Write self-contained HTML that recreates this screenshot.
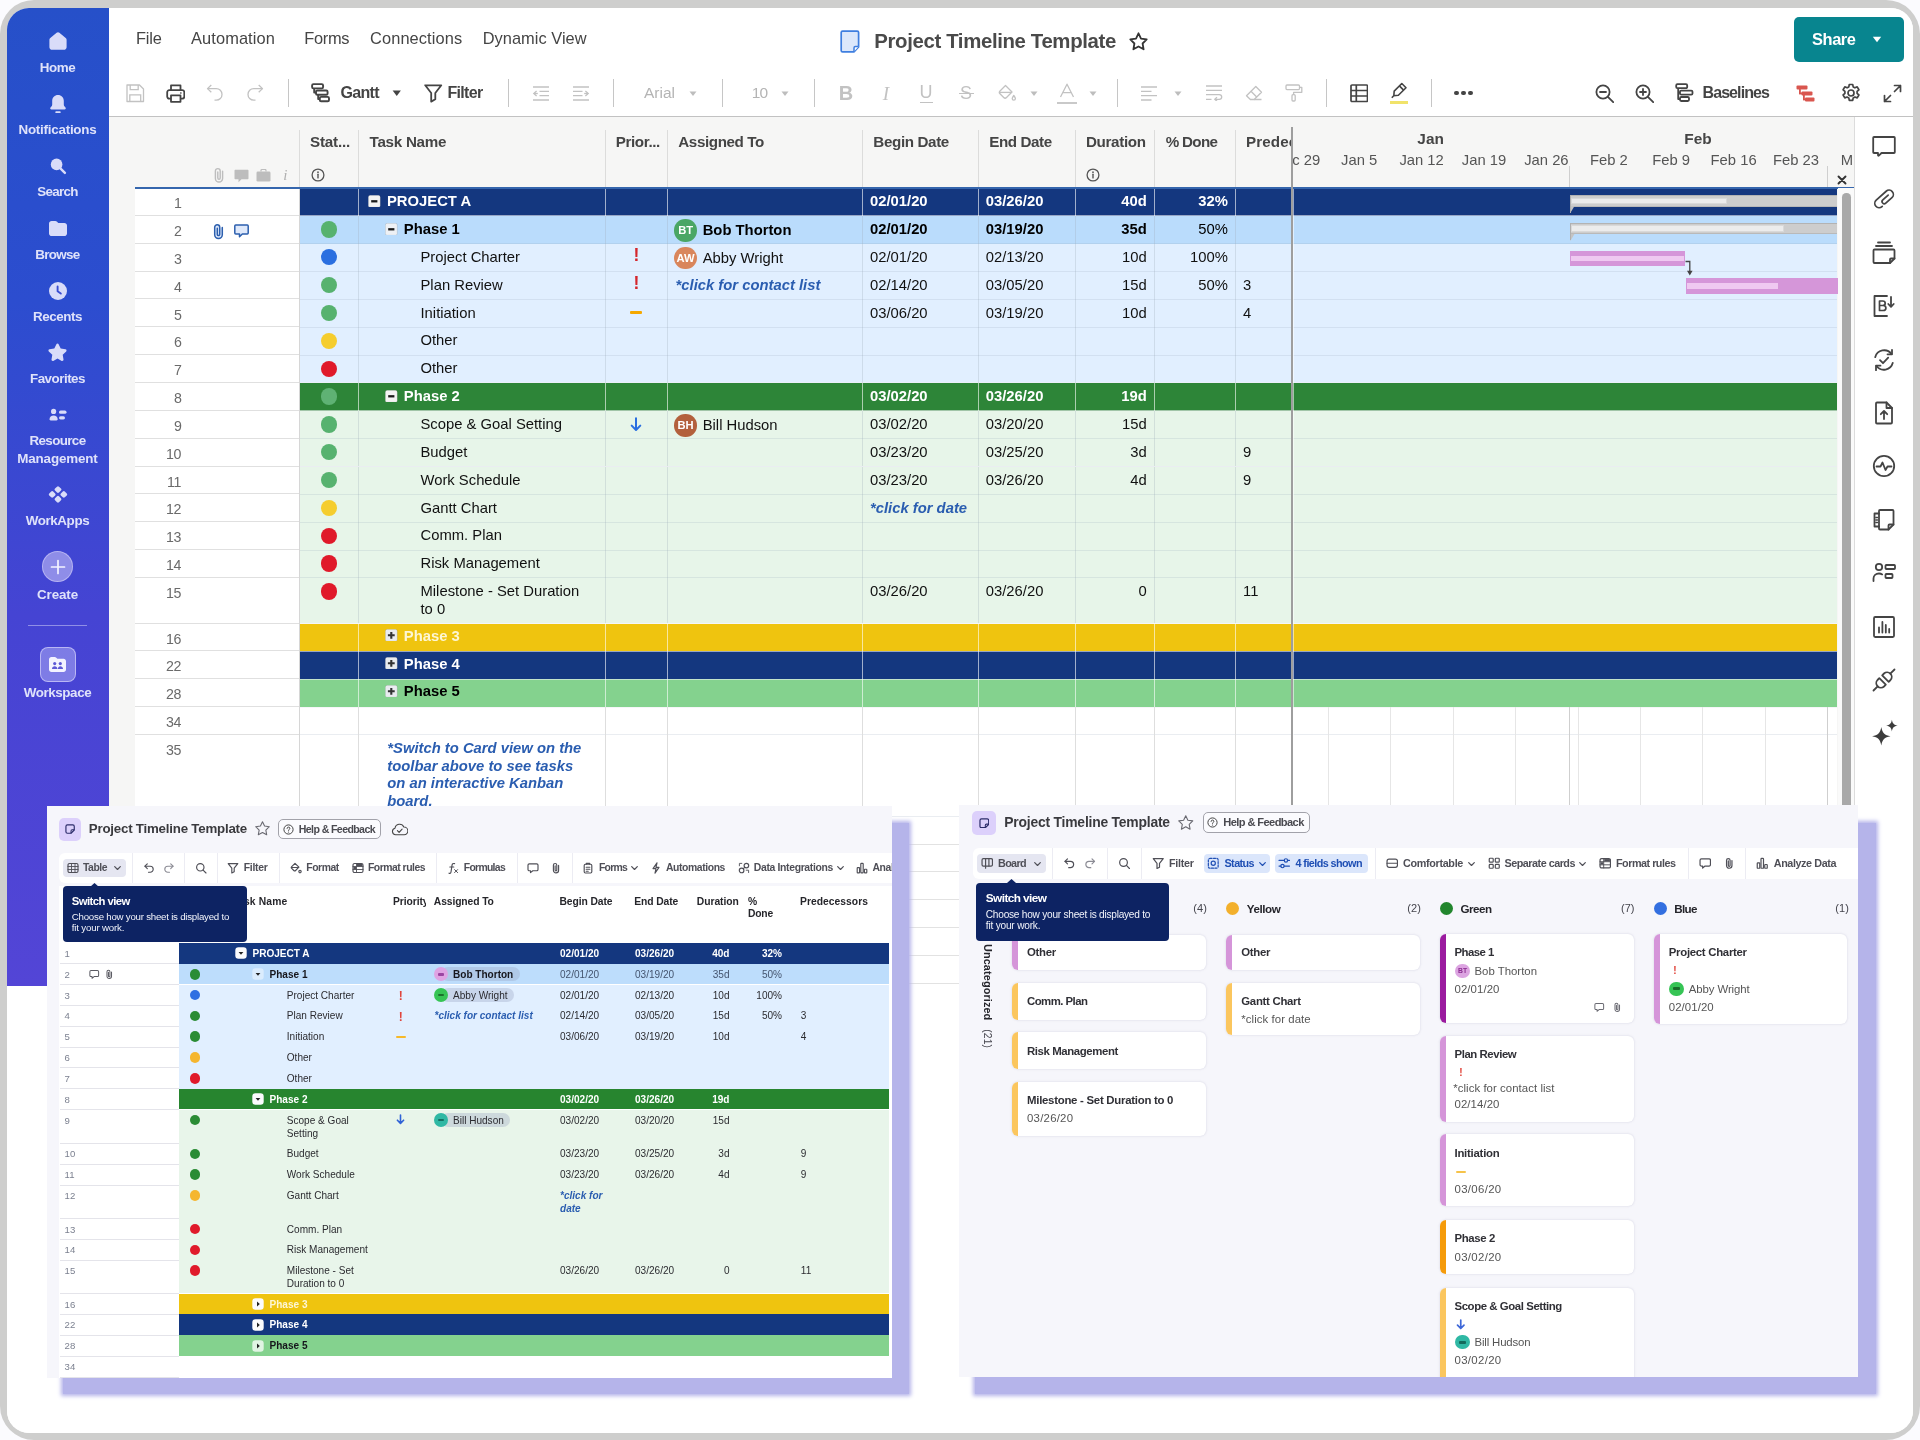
<!DOCTYPE html>
<html lang="en"><head><meta charset="utf-8"><title>Project Timeline Template</title>
<style>
*{box-sizing:border-box;margin:0;padding:0}
html,body{width:1920px;height:1440px}
body{position:relative;overflow:hidden;background:#fbfbfe;font-family:"Liberation Sans",sans-serif;color:#111}
.a{position:absolute;display:block}
.t{position:absolute;white-space:nowrap;line-height:1;display:block}
.ml{position:absolute;display:block}
</style></head><body>

<div class="a" style="left:0;top:0;width:1920px;height:1440px;border-radius:34px;background:#cececd"></div>
<div id="inner" class="a" style="left:7px;top:8px;width:1905.5px;height:1425px;border-radius:22px;background:#fff;overflow:hidden">
<div class="a" style="left:-7px;top:-8px;width:1920px;height:1440px;will-change:transform">
<div class="a" style="left:108.70px;top:117.00px;width:1745.30px;height:868.50px;background:#f6f6f5;"></div>
<div class="a" style="left:7.00px;top:8.00px;width:101.70px;height:977.50px;background:linear-gradient(180deg,#2650c9 0%,#2c4dcf 30%,#4544d3 62%,#5345d6 100%);"></div>
<svg class="a" style="left:47.50px;top:31.00px;" width="20" height="20" viewBox="0 0 20 20" ><path d="M10 1.2c.5 0 1 .2 1.4.5l6.3 5.2c.6.5.9 1.2.9 1.9v7.4c0 1.5-1.2 2.6-2.6 2.6H4c-1.400 0-2.600-1.100-2.600-2.600V8.800c0-.700.300-1.400.900-1.900l6.300-5.200c.400-.300.900-.500 1.400-.500z" fill="#d9dcf9"/></svg>
<span class="t" style="top:60.80px;font-size:13.4px;color:#dfe2fa;font-weight:bold;letter-spacing:-0.432px;left:39.75px;">Home</span>
<svg class="a" style="left:47.50px;top:93.50px;" width="20" height="21" viewBox="0 0 20 21" ><path d="M10 1c3.300 0 5.800 2.600 5.800 5.800v3.600c0 .800.300 1.500.800 2.100l.900 1c.700.800.100 2-.900 2H3.400c-1 0-1.600-1.200-.900-2l.900-1c.500-.600.800-1.300.800-2.100V6.800C4.200 3.600 6.700 1 10 1z" fill="#d9dcf9"/><rect x="7.300" y="17.300" width="5.400" height="1.700" rx=".85" fill="#d9dcf9"/></svg>
<span class="t" style="top:123.30px;font-size:13.4px;color:#dfe2fa;font-weight:bold;letter-spacing:-0.242px;left:18.50px;">Notifications</span>
<svg class="a" style="left:47.50px;top:156.00px;" width="20" height="20" viewBox="0 0 20 20" ><circle cx="8.600" cy="8.400" r="5.800" fill="#d9dcf9"/><path d="M12.600 12.600l4.300 4.300" stroke="#d9dcf9" stroke-width="2.400" stroke-linecap="round"/></svg>
<span class="t" style="top:185.30px;font-size:13.4px;color:#dfe2fa;font-weight:bold;letter-spacing:-0.699px;left:37.25px;">Search</span>
<svg class="a" style="left:47.50px;top:220.00px;" width="20" height="18" viewBox="0 0 20 18" ><path d="M1 3.600C1 2.200 2.200 1 3.600 1h3.600c.700 0 1.400.300 1.900.800l.900.900c.200.200.500.300.800.300h5.600C17.800 3 19 4.200 19 5.600v7.800c0 1.400-1.200 2.600-2.600 2.600H3.600C2.200 16 1 14.800 1 13.400z" fill="#d9dcf9"/></svg>
<span class="t" style="top:247.80px;font-size:13.4px;color:#dfe2fa;font-weight:bold;letter-spacing:-0.684px;left:35.35px;">Browse</span>
<svg class="a" style="left:47.50px;top:280.50px;" width="20" height="20" viewBox="0 0 20 20" ><circle cx="10" cy="10" r="9" fill="#d9dcf9"/><path d="M9.600 5.500v4.800l3.200 2.300" stroke="#3a4dd2" stroke-width="1.900" fill="none" stroke-linecap="round" stroke-linejoin="round"/></svg>
<span class="t" style="top:310.30px;font-size:13.4px;color:#dfe2fa;font-weight:bold;letter-spacing:-0.476px;left:33.10px;">Recents</span>
<svg class="a" style="left:47.00px;top:342.00px;" width="21" height="21" viewBox="0 0 21 21" ><path d="M10.500 1.500c.500 0 .900.300 1.100.700l2.100 4.400 4.800.700c1 .100 1.400 1.400.700 2.100l-3.500 3.400.800 4.800c.200 1-.900 1.800-1.800 1.300l-4.200-2.300-4.200 2.300c-.900.500-2-.300-1.800-1.300l.800-4.800-3.500-3.400c-.700-.700-.300-2 .700-2.100l4.800-.700 2.100-4.400c.200-.400.600-.700 1.100-.700z" fill="#d9dcf9"/></svg>
<span class="t" style="top:372.10px;font-size:13.4px;color:#dfe2fa;font-weight:bold;letter-spacing:-0.509px;left:30.00px;">Favorites</span>
<svg class="a" style="left:48.50px;top:408.00px;" width="18" height="15" viewBox="0 0 18 15" ><circle cx="4.600" cy="3.400" r="2.600" fill="#d9dcf9"/><path d="M0.500 11.200C0.500 8.900 2.300 7.400 4.600 7.400s4.100 1.500 4.100 3.800c0 .700-.500 1.200-1.200 1.200H1.700c-.700 0-1.200-.500-1.200-1.200z" fill="#d9dcf9"/><rect x="10" y="2.600" width="7.500" height="3.200" rx="1.600" fill="#d9dcf9"/><rect x="10" y="8.200" width="6" height="3.200" rx="1.600" fill="#d9dcf9"/></svg>
<span class="t" style="top:434.30px;font-size:13.4px;color:#dfe2fa;font-weight:bold;letter-spacing:-0.634px;left:29.50px;">Resource</span>
<span class="t" style="top:452.30px;font-size:13.4px;color:#dfe2fa;font-weight:bold;letter-spacing:-0.141px;left:17.25px;">Management</span>
<svg class="a" style="left:47.50px;top:486.00px;" width="20" height="18" viewBox="0 0 20 18" ><g fill="#d9dcf9"><rect x="7.200" y="0.800" width="5.600" height="5.600" rx="1.400" transform="rotate(45 10 3.600)"/><rect x="7.200" y="10.400" width="5.600" height="5.600" rx="1.400" transform="rotate(45 10 13.200)"/><rect x="1.400" y="5.600" width="5.600" height="5.600" rx="1.400" transform="rotate(45 4.200 8.400)"/><rect x="13" y="5.600" width="5.600" height="5.600" rx="1.400" transform="rotate(45 15.800 8.400)"/></g></svg>
<span class="t" style="top:514.30px;font-size:13.4px;color:#dfe2fa;font-weight:bold;letter-spacing:-0.407px;left:25.75px;">WorkApps</span>
<div class="a" style="left:42.00px;top:551.00px;width:31.00px;height:31.00px;background:rgba(190,186,246,.62);border-radius:50%;border:1px solid rgba(215,212,250,.55);"></div>
<svg class="a" style="left:49.50px;top:558.50px;" width="16" height="16" viewBox="0 0 16 16" ><path d="M8 1.500v13M1.500 8h13" stroke="#f4f4ff" stroke-width="1.700" stroke-linecap="round"/></svg>
<span class="t" style="top:587.80px;font-size:13.4px;color:#dfe2fa;font-weight:bold;letter-spacing:-0.119px;left:37.00px;">Create</span>
<div class="a" style="left:28.00px;top:624.50px;width:59.00px;height:1.20px;background:rgba(205,205,245,.55);"></div>
<div class="a" style="left:40.00px;top:646.50px;width:35.50px;height:35.00px;background:rgba(160,158,240,.62);border-radius:8px;border:1.5px solid rgba(206,204,250,.75);"></div>
<svg class="a" style="left:48.00px;top:655.50px;" width="19" height="17" viewBox="0 0 19 17" ><path d="M1 3.400C1 2.100 2.100 1 3.400 1h3.300c.600 0 1.200.200 1.600.700l.800.800c.200.200.400.300.700.300h5.800c1.300 0 2.400 1.100 2.400 2.400v8.400c0 1.300-1.100 2.400-2.400 2.400H3.400C2.100 16 1 14.900 1 13.600z" fill="#f3f3ff"/><g fill="#5d59d6"><circle cx="6.700" cy="7.600" r="1.600"/><circle cx="12.300" cy="7.600" r="1.600"/><path d="M4 12.700c0-1.500 1.200-2.500 2.700-2.500s2.700 1 2.700 2.500v.300H4zM9.900 12.700c0-1.500 1.100-2.500 2.400-2.500 1.500 0 2.700 1 2.700 2.500v.300H9.900z"/></g></svg>
<span class="t" style="top:685.80px;font-size:13.4px;color:#dfe2fa;font-weight:bold;letter-spacing:-0.417px;left:23.75px;">Workspace</span>
<div class="a" style="left:108.70px;top:8.00px;width:1804.30px;height:109.00px;background:#fff;"></div>
<span class="t" style="top:30.40px;font-size:16.4px;color:#454545;letter-spacing:-0.182px;left:136.00px;">File</span>
<span class="t" style="top:30.40px;font-size:16.4px;color:#454545;letter-spacing:0.104px;left:191.00px;">Automation</span>
<span class="t" style="top:30.40px;font-size:16.4px;color:#454545;letter-spacing:-0.292px;left:304.30px;">Forms</span>
<span class="t" style="top:30.40px;font-size:16.4px;color:#454545;letter-spacing:0.103px;left:370.00px;">Connections</span>
<span class="t" style="top:30.40px;font-size:16.4px;color:#454545;letter-spacing:0.034px;left:482.70px;">Dynamic View</span>
<svg class="a" style="left:840.00px;top:29.50px;" width="20" height="23" viewBox="0 0 20 23" ><path d="M2.600 1.200h14.600c.800 0 1.400.600 1.400 1.400v14.300l-4.400 4.900H2.600c-.800 0-1.400-.600-1.400-1.400V2.600c0-.800.600-1.400 1.400-1.400z" fill="#dce8fb" stroke="#3f7fe0" stroke-width="1.700" stroke-linejoin="round"/><path d="M18.600 16.600h-3.200c-.800 0-1.400.600-1.400 1.400v3.600" fill="#fff" stroke="#3f7fe0" stroke-width="1.500" stroke-linejoin="round"/></svg>
<span class="t" style="top:30.60px;font-size:20.4px;color:#4a4a4a;font-weight:bold;letter-spacing:-0.369px;left:874.30px;">Project Timeline Template</span>
<svg class="a" style="left:1127.50px;top:30.50px;" width="21" height="21" viewBox="0 0 21 21" ><path d="M10.500 2.300l2.500 5.300 5.700.800-4.100 4.100 1 5.800-5.100-2.800-5.100 2.800 1-5.800-4.100-4.100 5.700-.800z" fill="none" stroke="#333" stroke-width="1.800" stroke-linejoin="round"/></svg>
<div class="a" style="left:1793.50px;top:17.00px;width:110.50px;height:44.50px;background:#08858f;border-radius:5px;"></div>
<span class="t" style="top:30.60px;font-size:16.4px;color:#fff;font-weight:bold;letter-spacing:-0.396px;left:1812.00px;">Share</span>
<svg class="a" style="left:1872.00px;top:35.50px;" width="10" height="7" viewBox="0 0 10 7" ><path d="M0.800 0.800h8.400L5 6.200z" fill="#fff"/></svg>
<svg class="a" style="left:126.00px;top:84.00px;" width="18.5" height="18.5" viewBox="0 0 18.5 18.5" ><path d="M1 1h12.500l4 4v12.500H1z" fill="none" stroke="#c2c2c2" stroke-width="1.300" stroke-linejoin="round"/><path d="M4.200 1v4.600h8V1M3.800 17.500v-6.700h10.900v6.700" fill="none" stroke="#c2c2c2" stroke-width="1.300"/></svg>
<svg class="a" style="left:165.50px;top:83.50px;" width="19.5" height="19" viewBox="0 0 19.5 19" ><path d="M5 6.200V1.400h9.500v4.800" fill="none" stroke="#444" stroke-width="1.800" stroke-linejoin="round"/><rect x="1.200" y="6.200" width="17.100" height="8.400" rx="2" fill="none" stroke="#444" stroke-width="1.800"/><rect x="5" y="11.400" width="9.500" height="6.400" fill="#fff" stroke="#444" stroke-width="1.800" stroke-linejoin="round"/><path d="M14.200 9h1.300" stroke="#444" stroke-width="1.400"/></svg>
<svg class="a" style="left:206.00px;top:84.00px;" width="18" height="18" viewBox="0 0 18 18" ><path d="M1.500 4.600h8.700c3.300 0 5.800 2.500 5.800 5.800s-2.500 5.800-5.800 5.800H8.500" fill="none" stroke="#c2c2c2" stroke-width="1.300"/><path d="M5.300 1L1.500 4.600l3.800 3.600" fill="none" stroke="#c2c2c2" stroke-width="1.300" stroke-linejoin="round"/></svg>
<svg class="a" style="left:246.00px;top:84.00px;" width="18" height="18" viewBox="0 0 18 18" ><path d="M16.500 4.600H7.800C4.500 4.600 2 7.100 2 10.400s2.500 5.800 5.800 5.800h1.700" fill="none" stroke="#c2c2c2" stroke-width="1.300"/><path d="M12.700 1l3.800 3.600-3.800 3.600" fill="none" stroke="#c2c2c2" stroke-width="1.300" stroke-linejoin="round"/></svg>
<div class="a" style="left:287.50px;top:79.00px;width:1.40px;height:28.00px;background:#c6c6c6;"></div>
<svg class="a" style="left:310.80px;top:83.20px;" width="19.2" height="19.4" viewBox="0 0 19.2 19.4" ><g fill="none" stroke="#444" stroke-width="1.900" stroke-linejoin="round"><rect x="1.100" y="1.100" width="11" height="4.300" rx="1.300"/><rect x="5" y="7.500" width="11.600" height="4.300" rx="1.300"/><rect x="8.800" y="13.900" width="9.200" height="4.300" rx="1.300"/><path d="M3.200 5.400v4.200h1.800M7.200 11.800v4.200h1.600"/></g></svg>
<span class="t" style="top:85.20px;font-size:16px;color:#444;font-weight:bold;letter-spacing:-0.695px;left:340.50px;">Gantt</span>
<svg class="a" style="left:391.50px;top:90.30px;" width="9.5" height="6.5" viewBox="0 0 9.5 6.5" ><path d="M0.600 0.600h8.300L4.750 6z" fill="#444"/></svg>
<svg class="a" style="left:424.00px;top:84.00px;" width="18.5" height="19" viewBox="0 0 18.5 19" ><path d="M1.200 1.300h16.100l-6 7.700v6.300l-4.100 2.300V9z" fill="none" stroke="#444" stroke-width="1.800" stroke-linejoin="round"/></svg>
<span class="t" style="top:85.20px;font-size:16px;color:#444;font-weight:bold;letter-spacing:-0.686px;left:447.50px;">Filter</span>
<div class="a" style="left:507.50px;top:79.00px;width:1.40px;height:28.00px;background:#c6c6c6;"></div>
<svg class="a" style="left:532.00px;top:85.50px;" width="18" height="15" viewBox="0 0 18 15" ><g stroke="#c2c2c2" stroke-width="1.300" fill="none"><path d="M1 1h16M7.500 5.300H17M7.500 9.700H17M1 14h16M4.600 5L1.800 7.500 4.600 10"/><path d="M1.800 7.500h4"/></g></svg>
<svg class="a" style="left:572.00px;top:85.50px;" width="18" height="15" viewBox="0 0 18 15" ><g stroke="#c2c2c2" stroke-width="1.300" fill="none"><path d="M1 1h16M1 5.300h9.500M1 9.700h9.500M1 14h16M13.400 5l2.800 2.500L13.400 10"/><path d="M16.200 7.500h-4"/></g></svg>
<div class="a" style="left:612.50px;top:79.00px;width:1.40px;height:28.00px;background:#c6c6c6;"></div>
<span class="t" style="top:85.45px;font-size:15.5px;color:#b4b4b4;left:644.00px;">Arial</span>
<svg class="a" style="left:689.30px;top:90.80px;" width="8" height="5.5" viewBox="0 0 8 5.5" ><path d="M0.500 0.500h7L4 5z" fill="#bdbdbd"/></svg>
<div class="a" style="left:721.50px;top:79.00px;width:1.40px;height:28.00px;background:#c6c6c6;"></div>
<span class="t" style="top:85.45px;font-size:15.5px;color:#b4b4b4;letter-spacing:-0.820px;left:751.70px;">10</span>
<svg class="a" style="left:781.00px;top:90.80px;" width="8" height="5.5" viewBox="0 0 8 5.5" ><path d="M0.500 0.500h7L4 5z" fill="#bdbdbd"/></svg>
<div class="a" style="left:813.50px;top:79.00px;width:1.40px;height:28.00px;background:#c6c6c6;"></div>
<span class="t" style="top:83.20px;font-size:20px;color:#c2c2c2;font-weight:bold;left:838.78px;">B</span>
<span class="t" style="top:83.70px;font-size:19px;color:#c2c2c2;font-style:italic;left:882.86px;font-family:'Liberation Serif',serif;">I</span>
<span class="t" style="top:83.40px;font-size:18px;color:#c2c2c2;left:919.50px;">U</span>
<div class="a" style="left:919.50px;top:101.50px;width:13.00px;height:1.30px;background:#c2c2c2;"></div>
<span class="t" style="top:84.20px;font-size:18px;color:#c2c2c2;left:960.00px;">S</span>
<div class="a" style="left:958.50px;top:92.60px;width:15.00px;height:1.30px;background:#c2c2c2;"></div>
<svg class="a" style="left:998.00px;top:84.00px;" width="19" height="18" viewBox="0 0 19 18" ><g fill="none" stroke="#c2c2c2" stroke-width="1.300" stroke-linejoin="round"><path d="M7.500 1.500l6.500 6.500-5.500 5.500c-.800.800-2 .800-2.800 0L2 9.800c-.800-.800-.800-2 0-2.800z"/><path d="M1.600 8.400h12"/><path d="M15.800 11.500c1 1.400 1.600 2.300 1.600 3.100a1.600 1.600 0 01-3.200 0c0-.800.600-1.700 1.600-3.100z"/></g></svg>
<svg class="a" style="left:1030.00px;top:90.80px;" width="8" height="5.5" viewBox="0 0 8 5.5" ><path d="M0.500 0.500h7L4 5z" fill="#bdbdbd"/></svg>
<svg class="a" style="left:1057.50px;top:83.00px;" width="18" height="15" viewBox="0 0 18 15" ><path d="M2.500 14L9 1.200 15.500 14M4.800 9.600h8.400" fill="none" stroke="#c2c2c2" stroke-width="1.300" stroke-linejoin="round"/></svg>
<div class="a" style="left:1056.50px;top:101.50px;width:20.50px;height:2.20px;background:#c9c9c9;"></div>
<svg class="a" style="left:1089.00px;top:90.80px;" width="8" height="5.5" viewBox="0 0 8 5.5" ><path d="M0.500 0.500h7L4 5z" fill="#bdbdbd"/></svg>
<div class="a" style="left:1116.50px;top:79.00px;width:1.40px;height:28.00px;background:#c6c6c6;"></div>
<svg class="a" style="left:1139.50px;top:85.50px;" width="18" height="15" viewBox="0 0 18 15" ><path d="M1 1h16M1 5.300h10.500M1 9.700h16M1 14h10.500" stroke="#c2c2c2" stroke-width="1.300" fill="none"/></svg>
<svg class="a" style="left:1173.70px;top:90.80px;" width="8" height="5.5" viewBox="0 0 8 5.5" ><path d="M0.500 0.500h7L4 5z" fill="#bdbdbd"/></svg>
<svg class="a" style="left:1204.50px;top:85.00px;" width="18" height="16" viewBox="0 0 18 16" ><g stroke="#c2c2c2" stroke-width="1.300" fill="none"><path d="M1 1h16M1 5.300h16M1 9.700h13.200c1.500 0 2.500 1 2.500 2.300s-1 2.300-2.500 2.300H10M1 14.300h5.500"/><path d="M12 12.300l-2.200 2 2.200 2"/></g></svg>
<svg class="a" style="left:1245.00px;top:84.50px;" width="18" height="17" viewBox="0 0 18 17" ><g stroke="#c2c2c2" stroke-width="1.300" fill="none" stroke-linejoin="round"><path d="M10.800 1.500l5.700 5.700-7.300 7.300H5.400L1.500 10.700z"/><path d="M6 6.300l5.700 5.700M9.200 14.500h7.300"/></g></svg>
<svg class="a" style="left:1284.50px;top:84.00px;" width="18" height="18" viewBox="0 0 18 18" ><g stroke="#c2c2c2" stroke-width="1.300" fill="none" stroke-linejoin="round"><rect x="1" y="1" width="13.500" height="4.600" rx="1"/><path d="M14.500 3.300h2.300v5H8.600v2.400"/><rect x="7" y="10.700" width="3.200" height="6.300" rx="1"/></g></svg>
<div class="a" style="left:1325.50px;top:79.00px;width:1.40px;height:28.00px;background:#c6c6c6;"></div>
<svg class="a" style="left:1349.50px;top:84.00px;" width="18.5" height="18.5" viewBox="0 0 18.5 18.5" ><g stroke="#444" stroke-width="1.700" fill="none" stroke-linejoin="round"><rect x="1" y="1" width="16.500" height="16.500" rx="1"/><path d="M1 6.500h16.500M1 12h16.500M6.300 1v16.500"/></g></svg>
<svg class="a" style="left:1390.00px;top:82.00px;" width="18" height="17" viewBox="0 0 18 17" ><g stroke="#444" stroke-width="1.600" fill="none" stroke-linejoin="round"><path d="M11.800 1.500l4.200 4.200-7.600 7.600-4.600.400.400-4.600z"/><path d="M9.400 3.900l4.200 4.200M3.500 14l-1.700 1.800"/></g></svg>
<div class="a" style="left:1390.00px;top:101.00px;width:17.50px;height:2.60px;background:#f1e36a;"></div>
<div class="a" style="left:1430.50px;top:79.00px;width:1.40px;height:28.00px;background:#c6c6c6;"></div>
<div class="a" style="left:1454.40px;top:91.10px;width:4.20px;height:4.20px;background:#444;border-radius:50%;"></div>
<div class="a" style="left:1461.40px;top:91.10px;width:4.20px;height:4.20px;background:#444;border-radius:50%;"></div>
<div class="a" style="left:1468.40px;top:91.10px;width:4.20px;height:4.20px;background:#444;border-radius:50%;"></div>
<svg class="a" style="left:1594.50px;top:83.50px;" width="19.5" height="19.5" viewBox="0 0 19.5 19.5" ><g stroke="#444" stroke-width="1.800" fill="none" stroke-linecap="round"><circle cx="8" cy="8" r="6.600"/><path d="M12.900 12.900l5.300 5.300M5 8h6"/></g></svg>
<svg class="a" style="left:1634.50px;top:83.50px;" width="19.5" height="19.5" viewBox="0 0 19.5 19.5" ><g stroke="#444" stroke-width="1.800" fill="none" stroke-linecap="round"><circle cx="8" cy="8" r="6.600"/><path d="M12.900 12.900l5.300 5.300M5 8h6M8 5v6"/></g></svg>
<svg class="a" style="left:1675.00px;top:83.40px;" width="19" height="19.4" viewBox="0 0 19 19.4" ><g fill="none" stroke="#444" stroke-width="1.800" stroke-linejoin="round"><rect x="1.200" y="1.200" width="11" height="4" rx="1.200"/><rect x="5" y="7.600" width="12.500" height="4" rx="1.200"/><rect x="5" y="14" width="9" height="4" rx="1.200"/><path d="M3.200 5.200v10.800h1.800M3.200 9.600h1.800"/></g></svg>
<span class="t" style="top:85.20px;font-size:16px;color:#444;font-weight:bold;letter-spacing:-0.912px;left:1702.50px;">Baselines</span>
<svg class="a" style="left:1795.50px;top:84.00px;" width="19" height="19" viewBox="0 0 19 19" ><g fill="#d9564f"><rect x="0.500" y="1.500" width="11" height="4" rx="1"/><rect x="5.500" y="7.500" width="11" height="4" rx="1"/><rect x="9" y="13.500" width="9.500" height="4" rx="1"/><rect x="3" y="5" width="1.800" height="5"/><rect x="3" y="8.600" width="3" height="1.800"/><rect x="7" y="11" width="1.800" height="5"/><rect x="7" y="14.600" width="3" height="1.800"/></g></svg>
<svg class="a" style="left:1841.00px;top:83.00px;" width="20" height="20" viewBox="0 0 20 20" ><g fill="none" stroke="#444" stroke-width="1.700" stroke-linejoin="round"><circle cx="10" cy="10" r="3"/><path d="M8.300 1.500h3.400l.500 2.400 1.700.900 2.300-.900 1.700 2.900-1.800 1.600v2l1.800 1.600-1.700 2.900-2.300-.900-1.700.900-.500 2.400H8.300l-.500-2.400-1.700-.900-2.300.900-1.700-2.900 1.800-1.600v-2L2.100 6.800l1.700-2.900 2.300.900 1.700-.900z"/></g></svg>
<svg class="a" style="left:1882.50px;top:83.50px;" width="19" height="19" viewBox="0 0 19 19" ><g fill="none" stroke="#444" stroke-width="1.700" stroke-linecap="round" stroke-linejoin="round"><path d="M11.500 1.500h6v6M17.500 1.500l-6 6M7.500 17.500h-6v-6M1.500 17.500l6-6"/></g></svg>
<div class="a" style="left:108.70px;top:116.00px;width:1804.30px;height:1.00px;background:#c2c2c2;"></div>
<span class="t" style="top:133.70px;font-size:15.2px;color:#454545;font-weight:bold;letter-spacing:-0.198px;left:310.00px;">Stat...</span>
<span class="t" style="top:133.70px;font-size:15.2px;color:#454545;font-weight:bold;letter-spacing:-0.260px;left:369.50px;">Task Name</span>
<span class="t" style="top:133.70px;font-size:15.2px;color:#454545;font-weight:bold;letter-spacing:-0.376px;left:615.70px;">Prior...</span>
<span class="t" style="top:133.70px;font-size:15.2px;color:#454545;font-weight:bold;letter-spacing:-0.398px;left:678.30px;">Assigned To</span>
<span class="t" style="top:133.70px;font-size:15.2px;color:#454545;font-weight:bold;letter-spacing:-0.369px;left:873.30px;">Begin Date</span>
<span class="t" style="top:133.70px;font-size:15.2px;color:#454545;font-weight:bold;letter-spacing:-0.435px;left:989.30px;">End Date</span>
<span class="t" style="top:133.70px;font-size:15.2px;color:#454545;font-weight:bold;letter-spacing:-0.348px;left:1086.00px;">Duration</span>
<span class="t" style="top:133.70px;font-size:15.2px;color:#454545;font-weight:bold;letter-spacing:-0.690px;left:1165.70px;">% Done</span>
<div class="a" style="left:1236px;top:128px;width:55.5px;height:28px;overflow:hidden"><span class="t" style="top:5.70px;font-size:15.2px;color:#454545;font-weight:bold;letter-spacing:0.107px;left:10.00px;">Predecessors</span></div>
<div class="a" style="left:298.80px;top:130.00px;width:1.00px;height:58.00px;background:#dcdcdb;"></div>
<div class="a" style="left:357.80px;top:130.00px;width:1.00px;height:58.00px;background:#dcdcdb;"></div>
<div class="a" style="left:604.50px;top:130.00px;width:1.00px;height:58.00px;background:#dcdcdb;"></div>
<div class="a" style="left:666.90px;top:130.00px;width:1.00px;height:58.00px;background:#dcdcdb;"></div>
<div class="a" style="left:861.80px;top:130.00px;width:1.00px;height:58.00px;background:#dcdcdb;"></div>
<div class="a" style="left:977.80px;top:130.00px;width:1.00px;height:58.00px;background:#dcdcdb;"></div>
<div class="a" style="left:1074.50px;top:130.00px;width:1.00px;height:58.00px;background:#dcdcdb;"></div>
<div class="a" style="left:1153.80px;top:130.00px;width:1.00px;height:58.00px;background:#dcdcdb;"></div>
<div class="a" style="left:1234.50px;top:130.00px;width:1.00px;height:58.00px;background:#dcdcdb;"></div>
<svg class="a" style="left:212.50px;top:167.00px;" width="12" height="16" viewBox="0 0 12 16" ><path d="M9.600 4.200v7.200a3.600 3.600 0 01-7.200 0V4a2.400 2.400 0 014.800 0v7a1.200 1.200 0 01-2.400 0V5" fill="none" stroke="#bdbdbd" stroke-width="1.400" stroke-linecap="round"/></svg>
<svg class="a" style="left:233.50px;top:168.50px;" width="15" height="14" viewBox="0 0 15 14" ><path d="M1.500 0.800h12c.600 0 1 .400 1 1v7.400c0 .600-.400 1-1 1H7.500l-3 3v-3h-3c-.600 0-1-.400-1-1V1.800c0-.600.400-1 1-1z" fill="#bdbdbd"/></svg>
<svg class="a" style="left:255.50px;top:168.50px;" width="15" height="13" viewBox="0 0 15 13" ><path d="M5 2.600V1.400c0-.500.400-.900.900-.900h3.200c.500 0 .900.400.900.900v1.200" fill="none" stroke="#bdbdbd" stroke-width="1.200"/><rect x="0.500" y="2.600" width="14" height="10" rx="1.400" fill="#bdbdbd"/></svg>
<span class="t" style="top:168.00px;font-size:15px;color:#b0b0b0;font-style:italic;left:283.33px;font-family:'Liberation Serif',serif;">i</span>
<svg class="a" style="left:310.50px;top:168.00px;" width="14" height="14" viewBox="0 0 14 14" ><circle cx="7" cy="7" r="5.900" fill="none" stroke="#555" stroke-width="1.300"/><path d="M7 6.300v3.600" stroke="#555" stroke-width="1.400" stroke-linecap="round"/><circle cx="7" cy="4.200" r=".85" fill="#555"/></svg>
<svg class="a" style="left:1086.30px;top:168.00px;" width="14" height="14" viewBox="0 0 14 14" ><circle cx="7" cy="7" r="5.900" fill="none" stroke="#555" stroke-width="1.300"/><path d="M7 6.300v3.600" stroke="#555" stroke-width="1.400" stroke-linecap="round"/><circle cx="7" cy="4.200" r=".85" fill="#555"/></svg>
<span class="t" style="top:130.90px;font-size:15.4px;color:#454545;font-weight:bold;left:1417.33px;">Jan</span>
<span class="t" style="top:130.90px;font-size:15.4px;color:#454545;font-weight:bold;left:1684.31px;">Feb</span>
<div class="a" style="left:1293px;top:150px;width:559px;height:22px;overflow:hidden">
<span class="t" style="top:3.40px;font-size:14.8px;color:#555;left:-19.65px;">Dec 29</span>
<span class="t" style="top:3.40px;font-size:14.8px;color:#555;left:48.10px;">Jan 5</span>
<span class="t" style="top:3.40px;font-size:14.8px;color:#555;left:106.38px;">Jan 12</span>
<span class="t" style="top:3.40px;font-size:14.8px;color:#555;left:168.78px;">Jan 19</span>
<span class="t" style="top:3.40px;font-size:14.8px;color:#555;left:231.18px;">Jan 26</span>
<span class="t" style="top:3.40px;font-size:14.8px;color:#555;left:296.88px;">Feb 2</span>
<span class="t" style="top:3.40px;font-size:14.8px;color:#555;left:359.28px;">Feb 9</span>
<span class="t" style="top:3.40px;font-size:14.8px;color:#555;left:417.56px;">Feb 16</span>
<span class="t" style="top:3.40px;font-size:14.8px;color:#555;left:479.96px;">Feb 23</span>
<span class="t" style="top:3.40px;font-size:14.8px;color:#555;left:547.68px;">Mar 1</span>
</div>
<div class="a" style="left:1568.80px;top:166.00px;width:1.00px;height:22.00px;background:#cfcfcf;"></div>
<div class="a" style="left:1826.80px;top:166.00px;width:1.00px;height:22.00px;background:#cfcfcf;"></div>
<svg class="a" style="left:1837.00px;top:174.50px;" width="10" height="10" viewBox="0 0 10 10" ><path d="M1.500 1.500l7 7M8.500 1.500l-7 7" stroke="#333" stroke-width="1.900" stroke-linecap="round"/></svg>
<div class="a" style="left:135.00px;top:188.00px;width:164.30px;height:797.50px;background:#fff;"></div>
<div class="a" style="left:299.30px;top:188.00px;width:1538.20px;height:797.50px;background:#fff;"></div>
<div class="a" style="left:299.30px;top:188.00px;width:1538.20px;height:27.85px;background:#14377f;"></div>
<span class="t" style="top:196.10px;font-size:14.2px;color:#6a6a6a;left:173.90px;letter-spacing:-0.35px;">1</span>
<span class="t" style="top:194.20px;font-size:14.8px;color:#fff;font-weight:bold;left:387.00px;">PROJECT A</span>
<svg class="a" style="left:368.30px;top:194.70px;" width="12.6" height="12.6" viewBox="0 0 12.6 12.6" ><rect x="0.300" y="0.300" width="12" height="12" rx="1.800" fill="#f3f3f3" stroke="rgba(0,0,0,.18)" stroke-width=".6"/><path d="M3.200 6.300h6.200" stroke="#1a1a1a" stroke-width="2.300"/></svg>
<span class="t" style="top:194.20px;font-size:14.8px;color:#fff;font-weight:bold;left:870.00px;">02/01/20</span>
<span class="t" style="top:194.20px;font-size:14.8px;color:#fff;font-weight:bold;left:985.80px;">03/26/20</span>
<span class="t" style="top:194.20px;font-size:14.8px;color:#fff;font-weight:bold;left:1121.20px;">40d</span>
<span class="t" style="top:194.20px;font-size:14.8px;color:#fff;font-weight:bold;left:1198.18px;">32%</span>
<div class="a" style="left:299.30px;top:215.85px;width:1538.20px;height:27.85px;background:#badcfc;"></div>
<span class="t" style="top:223.95px;font-size:14.2px;color:#6a6a6a;left:173.90px;letter-spacing:-0.35px;">2</span>
<div class="a" style="left:320.50px;top:221.25px;width:16.40px;height:16.40px;background:#57b26f;border-radius:50%;"></div>
<span class="t" style="top:222.05px;font-size:14.8px;color:#000;font-weight:bold;left:403.80px;">Phase 1</span>
<svg class="a" style="left:385.10px;top:222.55px;" width="12.6" height="12.6" viewBox="0 0 12.6 12.6" ><rect x="0.300" y="0.300" width="12" height="12" rx="1.800" fill="#eef1f5" stroke="rgba(0,0,0,.18)" stroke-width=".6"/><path d="M3.200 6.300h6.200" stroke="#1a1a1a" stroke-width="2.300"/></svg>
<div class="a" style="left:674.40px;top:219.25px;width:22.40px;height:22.40px;background:#4aa665;border-radius:50%;"></div>
<span class="t" style="top:225.05px;font-size:11.2px;color:#fff;font-weight:bold;left:678.14px;">BT</span>
<span class="t" style="top:223.05px;font-size:14.8px;color:#000;font-weight:bold;left:702.70px;">Bob Thorton</span>
<span class="t" style="top:222.05px;font-size:14.8px;color:#000;font-weight:bold;left:870.00px;">02/01/20</span>
<span class="t" style="top:222.05px;font-size:14.8px;color:#000;font-weight:bold;left:985.80px;">03/19/20</span>
<span class="t" style="top:222.05px;font-size:14.8px;color:#000;font-weight:bold;left:1121.20px;">35d</span>
<span class="t" style="top:222.05px;font-size:14.8px;color:#000;left:1198.18px;">50%</span>
<div class="a" style="left:299.30px;top:243.70px;width:1538.20px;height:27.85px;background:#e1efff;"></div>
<span class="t" style="top:251.80px;font-size:14.2px;color:#6a6a6a;left:173.90px;letter-spacing:-0.35px;">3</span>
<div class="a" style="left:320.50px;top:249.10px;width:16.40px;height:16.40px;background:#2a6fe0;border-radius:50%;"></div>
<span class="t" style="top:249.90px;font-size:14.8px;color:#111;left:420.50px;">Project Charter</span>
<span class="t" style="top:247.05px;font-size:17.5px;color:#d4262c;font-weight:bold;left:633.39px;">!</span>
<div class="a" style="left:674.40px;top:247.10px;width:22.40px;height:22.40px;background:#d9865c;border-radius:50%;"></div>
<span class="t" style="top:252.90px;font-size:11.2px;color:#fff;font-weight:bold;left:676.58px;">AW</span>
<span class="t" style="top:250.90px;font-size:14.8px;color:#111;left:702.70px;">Abby Wright</span>
<span class="t" style="top:249.90px;font-size:14.8px;color:#111;left:870.00px;">02/01/20</span>
<span class="t" style="top:249.90px;font-size:14.8px;color:#111;left:985.80px;">02/13/20</span>
<span class="t" style="top:249.90px;font-size:14.8px;color:#111;left:1122.01px;">10d</span>
<span class="t" style="top:249.90px;font-size:14.8px;color:#111;left:1189.95px;">100%</span>
<div class="a" style="left:299.30px;top:271.55px;width:1538.20px;height:27.85px;background:#e1efff;"></div>
<span class="t" style="top:279.65px;font-size:14.2px;color:#6a6a6a;left:173.90px;letter-spacing:-0.35px;">4</span>
<div class="a" style="left:320.50px;top:276.95px;width:16.40px;height:16.40px;background:#57b26f;border-radius:50%;"></div>
<span class="t" style="top:277.75px;font-size:14.8px;color:#111;left:420.50px;">Plan Review</span>
<span class="t" style="top:274.90px;font-size:17.5px;color:#d4262c;font-weight:bold;left:633.39px;">!</span>
<span class="t" style="top:277.75px;font-size:14.8px;color:#2a5db0;font-weight:bold;font-style:italic;left:675.60px;">*click for contact list</span>
<span class="t" style="top:277.75px;font-size:14.8px;color:#111;left:870.00px;">02/14/20</span>
<span class="t" style="top:277.75px;font-size:14.8px;color:#111;left:985.80px;">03/05/20</span>
<span class="t" style="top:277.75px;font-size:14.8px;color:#111;left:1122.01px;">15d</span>
<span class="t" style="top:277.75px;font-size:14.8px;color:#111;left:1198.18px;">50%</span>
<span class="t" style="top:277.75px;font-size:14.8px;color:#111;left:1243.00px;">3</span>
<div class="a" style="left:299.30px;top:299.40px;width:1538.20px;height:27.85px;background:#e1efff;"></div>
<span class="t" style="top:307.50px;font-size:14.2px;color:#6a6a6a;left:173.90px;letter-spacing:-0.35px;">5</span>
<div class="a" style="left:320.50px;top:304.80px;width:16.40px;height:16.40px;background:#57b26f;border-radius:50%;"></div>
<span class="t" style="top:305.60px;font-size:14.8px;color:#111;left:420.50px;">Initiation</span>
<div class="a" style="left:630.00px;top:310.60px;width:12.00px;height:3.00px;background:#f5a800;border-radius:1px;"></div>
<span class="t" style="top:305.60px;font-size:14.8px;color:#111;left:870.00px;">03/06/20</span>
<span class="t" style="top:305.60px;font-size:14.8px;color:#111;left:985.80px;">03/19/20</span>
<span class="t" style="top:305.60px;font-size:14.8px;color:#111;left:1122.01px;">10d</span>
<span class="t" style="top:305.60px;font-size:14.8px;color:#111;left:1243.00px;">4</span>
<div class="a" style="left:299.30px;top:327.25px;width:1538.20px;height:27.85px;background:#e1efff;"></div>
<span class="t" style="top:335.35px;font-size:14.2px;color:#6a6a6a;left:173.90px;letter-spacing:-0.35px;">6</span>
<div class="a" style="left:320.50px;top:332.65px;width:16.40px;height:16.40px;background:#f5cd2e;border-radius:50%;"></div>
<span class="t" style="top:333.45px;font-size:14.8px;color:#111;left:420.50px;">Other</span>
<div class="a" style="left:299.30px;top:355.10px;width:1538.20px;height:27.85px;background:#e1efff;"></div>
<span class="t" style="top:363.20px;font-size:14.2px;color:#6a6a6a;left:173.90px;letter-spacing:-0.35px;">7</span>
<div class="a" style="left:320.50px;top:360.50px;width:16.40px;height:16.40px;background:#e0192a;border-radius:50%;"></div>
<span class="t" style="top:361.30px;font-size:14.8px;color:#111;left:420.50px;">Other</span>
<div class="a" style="left:299.30px;top:382.95px;width:1538.20px;height:27.85px;background:#2d8538;"></div>
<span class="t" style="top:391.05px;font-size:14.2px;color:#6a6a6a;left:173.90px;letter-spacing:-0.35px;">8</span>
<div class="a" style="left:320.50px;top:388.35px;width:16.40px;height:16.40px;background:#5fb274;border-radius:50%;"></div>
<span class="t" style="top:389.15px;font-size:14.8px;color:#fff;font-weight:bold;left:403.80px;">Phase 2</span>
<svg class="a" style="left:385.10px;top:389.65px;" width="12.6" height="12.6" viewBox="0 0 12.6 12.6" ><rect x="0.300" y="0.300" width="12" height="12" rx="1.800" fill="#f3f3f3" stroke="rgba(0,0,0,.18)" stroke-width=".6"/><path d="M3.200 6.300h6.200" stroke="#1a1a1a" stroke-width="2.300"/></svg>
<span class="t" style="top:389.15px;font-size:14.8px;color:#fff;font-weight:bold;left:870.00px;">03/02/20</span>
<span class="t" style="top:389.15px;font-size:14.8px;color:#fff;font-weight:bold;left:985.80px;">03/26/20</span>
<span class="t" style="top:389.15px;font-size:14.8px;color:#fff;font-weight:bold;left:1121.20px;">19d</span>
<div class="a" style="left:299.30px;top:410.80px;width:1538.20px;height:27.85px;background:#e7f5e9;"></div>
<span class="t" style="top:418.90px;font-size:14.2px;color:#6a6a6a;left:173.90px;letter-spacing:-0.35px;">9</span>
<div class="a" style="left:320.50px;top:416.20px;width:16.40px;height:16.40px;background:#57b26f;border-radius:50%;"></div>
<span class="t" style="top:417.00px;font-size:14.8px;color:#111;left:420.50px;">Scope &amp; Goal Setting</span>
<svg class="a" style="left:630.00px;top:417.30px;" width="12" height="15" viewBox="0 0 12 15" ><path d="M6 1.200v11.500M1.700 8.600L6 13l4.300-4.400" fill="none" stroke="#2a6fe0" stroke-width="2" stroke-linecap="round" stroke-linejoin="round"/></svg>
<div class="a" style="left:674.40px;top:414.20px;width:22.40px;height:22.40px;background:#b3603c;border-radius:50%;"></div>
<span class="t" style="top:420.00px;font-size:11.2px;color:#fff;font-weight:bold;left:677.51px;">BH</span>
<span class="t" style="top:418.00px;font-size:14.8px;color:#111;left:702.70px;">Bill Hudson</span>
<span class="t" style="top:417.00px;font-size:14.8px;color:#111;left:870.00px;">03/02/20</span>
<span class="t" style="top:417.00px;font-size:14.8px;color:#111;left:985.80px;">03/20/20</span>
<span class="t" style="top:417.00px;font-size:14.8px;color:#111;left:1122.01px;">15d</span>
<div class="a" style="left:299.30px;top:438.65px;width:1538.20px;height:27.85px;background:#e7f5e9;"></div>
<span class="t" style="top:446.75px;font-size:14.2px;color:#6a6a6a;left:166.01px;letter-spacing:-0.35px;">10</span>
<div class="a" style="left:320.50px;top:444.05px;width:16.40px;height:16.40px;background:#57b26f;border-radius:50%;"></div>
<span class="t" style="top:444.85px;font-size:14.8px;color:#111;left:420.50px;">Budget</span>
<span class="t" style="top:444.85px;font-size:14.8px;color:#111;left:870.00px;">03/23/20</span>
<span class="t" style="top:444.85px;font-size:14.8px;color:#111;left:985.80px;">03/25/20</span>
<span class="t" style="top:444.85px;font-size:14.8px;color:#111;left:1130.24px;">3d</span>
<span class="t" style="top:444.85px;font-size:14.8px;color:#111;left:1243.00px;">9</span>
<div class="a" style="left:299.30px;top:466.50px;width:1538.20px;height:27.85px;background:#e7f5e9;"></div>
<span class="t" style="top:474.60px;font-size:14.2px;color:#6a6a6a;left:167.06px;letter-spacing:-0.35px;">11</span>
<div class="a" style="left:320.50px;top:471.90px;width:16.40px;height:16.40px;background:#57b26f;border-radius:50%;"></div>
<span class="t" style="top:472.70px;font-size:14.8px;color:#111;left:420.50px;">Work Schedule</span>
<span class="t" style="top:472.70px;font-size:14.8px;color:#111;left:870.00px;">03/23/20</span>
<span class="t" style="top:472.70px;font-size:14.8px;color:#111;left:985.80px;">03/26/20</span>
<span class="t" style="top:472.70px;font-size:14.8px;color:#111;left:1130.24px;">4d</span>
<span class="t" style="top:472.70px;font-size:14.8px;color:#111;left:1243.00px;">9</span>
<div class="a" style="left:299.30px;top:494.35px;width:1538.20px;height:27.85px;background:#e7f5e9;"></div>
<span class="t" style="top:502.45px;font-size:14.2px;color:#6a6a6a;left:166.01px;letter-spacing:-0.35px;">12</span>
<div class="a" style="left:320.50px;top:499.75px;width:16.40px;height:16.40px;background:#f5cd2e;border-radius:50%;"></div>
<span class="t" style="top:500.55px;font-size:14.8px;color:#111;left:420.50px;">Gantt Chart</span>
<span class="t" style="top:500.55px;font-size:14.8px;color:#2a5db0;font-weight:bold;font-style:italic;left:870.00px;">*click for date</span>
<div class="a" style="left:299.30px;top:522.20px;width:1538.20px;height:27.85px;background:#e7f5e9;"></div>
<span class="t" style="top:530.30px;font-size:14.2px;color:#6a6a6a;left:166.01px;letter-spacing:-0.35px;">13</span>
<div class="a" style="left:320.50px;top:527.60px;width:16.40px;height:16.40px;background:#e0192a;border-radius:50%;"></div>
<span class="t" style="top:528.40px;font-size:14.8px;color:#111;left:420.50px;">Comm. Plan</span>
<div class="a" style="left:299.30px;top:550.05px;width:1538.20px;height:27.85px;background:#e7f5e9;"></div>
<span class="t" style="top:558.15px;font-size:14.2px;color:#6a6a6a;left:166.01px;letter-spacing:-0.35px;">14</span>
<div class="a" style="left:320.50px;top:555.45px;width:16.40px;height:16.40px;background:#e0192a;border-radius:50%;"></div>
<span class="t" style="top:556.25px;font-size:14.8px;color:#111;left:420.50px;">Risk Management</span>
<div class="a" style="left:299.30px;top:577.90px;width:1538.20px;height:45.60px;background:#e7f5e9;"></div>
<span class="t" style="top:586.00px;font-size:14.2px;color:#6a6a6a;left:166.01px;letter-spacing:-0.35px;">15</span>
<div class="a" style="left:320.50px;top:583.30px;width:16.40px;height:16.40px;background:#e0192a;border-radius:50%;"></div>
<span class="t" style="top:584.10px;font-size:14.8px;color:#111;left:420.50px;">Milestone - Set Duration</span>
<span class="t" style="top:601.90px;font-size:14.8px;color:#111;left:420.50px;">to 0</span>
<span class="t" style="top:584.10px;font-size:14.8px;color:#111;left:870.00px;">03/26/20</span>
<span class="t" style="top:584.10px;font-size:14.8px;color:#111;left:985.80px;">03/26/20</span>
<span class="t" style="top:584.10px;font-size:14.8px;color:#111;left:1138.47px;">0</span>
<span class="t" style="top:584.10px;font-size:14.8px;color:#111;left:1243.00px;">11</span>
<div class="a" style="left:299.30px;top:623.50px;width:1538.20px;height:27.85px;background:#efc40f;"></div>
<span class="t" style="top:631.60px;font-size:14.2px;color:#6a6a6a;left:166.01px;letter-spacing:-0.35px;">16</span>
<span class="t" style="top:628.70px;font-size:14.8px;color:#fdf6d4;font-weight:bold;left:403.80px;">Phase 3</span>
<svg class="a" style="left:385.10px;top:628.90px;" width="12.6" height="12.6" viewBox="0 0 12.6 12.6" ><rect x="0.300" y="0.300" width="12" height="12" rx="1.800" fill="#e9ecf0" stroke="rgba(0,0,0,.18)" stroke-width=".6"/><path d="M2.900 6.300h6.800M6.300 2.900v6.800" stroke="#333" stroke-width="2.100"/></svg>
<div class="a" style="left:299.30px;top:651.35px;width:1538.20px;height:27.85px;background:#14377f;"></div>
<span class="t" style="top:659.45px;font-size:14.2px;color:#6a6a6a;left:166.01px;letter-spacing:-0.35px;">22</span>
<span class="t" style="top:656.55px;font-size:14.8px;color:#fff;font-weight:bold;left:403.80px;">Phase 4</span>
<svg class="a" style="left:385.10px;top:656.75px;" width="12.6" height="12.6" viewBox="0 0 12.6 12.6" ><rect x="0.300" y="0.300" width="12" height="12" rx="1.800" fill="#e9ecf0" stroke="rgba(0,0,0,.18)" stroke-width=".6"/><path d="M2.900 6.300h6.800M6.300 2.900v6.800" stroke="#333" stroke-width="2.100"/></svg>
<div class="a" style="left:299.30px;top:679.20px;width:1538.20px;height:27.85px;background:#84d28e;"></div>
<span class="t" style="top:687.30px;font-size:14.2px;color:#6a6a6a;left:166.01px;letter-spacing:-0.35px;">28</span>
<span class="t" style="top:684.40px;font-size:14.8px;color:#000;font-weight:bold;left:403.80px;">Phase 5</span>
<svg class="a" style="left:385.10px;top:684.60px;" width="12.6" height="12.6" viewBox="0 0 12.6 12.6" ><rect x="0.300" y="0.300" width="12" height="12" rx="1.800" fill="#e9ecf0" stroke="rgba(0,0,0,.18)" stroke-width=".6"/><path d="M2.900 6.300h6.800M6.300 2.900v6.800" stroke="#333" stroke-width="2.100"/></svg>
<span class="t" style="top:715.15px;font-size:14.2px;color:#6a6a6a;left:166.01px;letter-spacing:-0.35px;">34</span>
<span class="t" style="top:743.00px;font-size:14.2px;color:#6a6a6a;left:166.01px;letter-spacing:-0.35px;">35</span>
<span class="t" style="top:740.80px;font-size:14.8px;color:#2a5db0;font-weight:bold;font-style:italic;left:387.30px;">*Switch to Card view on the</span>
<span class="t" style="top:758.55px;font-size:14.8px;color:#2a5db0;font-weight:bold;font-style:italic;left:387.30px;">toolbar above to see tasks</span>
<span class="t" style="top:776.30px;font-size:14.8px;color:#2a5db0;font-weight:bold;font-style:italic;left:387.30px;">on an interactive Kanban</span>
<span class="t" style="top:794.05px;font-size:14.8px;color:#2a5db0;font-weight:bold;font-style:italic;left:387.30px;">board.</span>
<div class="a" style="left:135.00px;top:215.00px;width:164.30px;height:1.00px;background:#e0e0e0;"></div>
<div class="a" style="left:299.30px;top:215.35px;width:1538.20px;height:1.00px;background:rgba(150,165,185,.2);"></div>
<div class="a" style="left:135.00px;top:243.00px;width:164.30px;height:1.00px;background:#e0e0e0;"></div>
<div class="a" style="left:299.30px;top:243.20px;width:1538.20px;height:1.00px;background:rgba(150,165,185,.2);"></div>
<div class="a" style="left:135.00px;top:271.00px;width:164.30px;height:1.00px;background:#e0e0e0;"></div>
<div class="a" style="left:299.30px;top:271.05px;width:1538.20px;height:1.00px;background:rgba(150,165,185,.2);"></div>
<div class="a" style="left:135.00px;top:298.00px;width:164.30px;height:1.00px;background:#e0e0e0;"></div>
<div class="a" style="left:299.30px;top:298.90px;width:1538.20px;height:1.00px;background:rgba(150,165,185,.2);"></div>
<div class="a" style="left:135.00px;top:326.00px;width:164.30px;height:1.00px;background:#e0e0e0;"></div>
<div class="a" style="left:299.30px;top:326.75px;width:1538.20px;height:1.00px;background:rgba(150,165,185,.2);"></div>
<div class="a" style="left:135.00px;top:354.00px;width:164.30px;height:1.00px;background:#e0e0e0;"></div>
<div class="a" style="left:299.30px;top:354.60px;width:1538.20px;height:1.00px;background:rgba(150,165,185,.2);"></div>
<div class="a" style="left:135.00px;top:382.00px;width:164.30px;height:1.00px;background:#e0e0e0;"></div>
<div class="a" style="left:299.30px;top:382.45px;width:1538.20px;height:1.00px;background:rgba(150,165,185,.2);"></div>
<div class="a" style="left:135.00px;top:410.00px;width:164.30px;height:1.00px;background:#e0e0e0;"></div>
<div class="a" style="left:299.30px;top:410.30px;width:1538.20px;height:1.00px;background:rgba(150,165,185,.2);"></div>
<div class="a" style="left:135.00px;top:438.00px;width:164.30px;height:1.00px;background:#e0e0e0;"></div>
<div class="a" style="left:299.30px;top:438.15px;width:1538.20px;height:1.00px;background:rgba(150,165,185,.2);"></div>
<div class="a" style="left:135.00px;top:466.00px;width:164.30px;height:1.00px;background:#e0e0e0;"></div>
<div class="a" style="left:299.30px;top:466.00px;width:1538.20px;height:1.00px;background:rgba(150,165,185,.2);"></div>
<div class="a" style="left:135.00px;top:493.00px;width:164.30px;height:1.00px;background:#e0e0e0;"></div>
<div class="a" style="left:299.30px;top:493.85px;width:1538.20px;height:1.00px;background:rgba(150,165,185,.2);"></div>
<div class="a" style="left:135.00px;top:521.00px;width:164.30px;height:1.00px;background:#e0e0e0;"></div>
<div class="a" style="left:299.30px;top:521.70px;width:1538.20px;height:1.00px;background:rgba(150,165,185,.2);"></div>
<div class="a" style="left:135.00px;top:549.00px;width:164.30px;height:1.00px;background:#e0e0e0;"></div>
<div class="a" style="left:299.30px;top:549.55px;width:1538.20px;height:1.00px;background:rgba(150,165,185,.2);"></div>
<div class="a" style="left:135.00px;top:577.00px;width:164.30px;height:1.00px;background:#e0e0e0;"></div>
<div class="a" style="left:299.30px;top:577.40px;width:1538.20px;height:1.00px;background:rgba(150,165,185,.2);"></div>
<div class="a" style="left:135.00px;top:623.00px;width:164.30px;height:1.00px;background:#e0e0e0;"></div>
<div class="a" style="left:299.30px;top:623.00px;width:1538.20px;height:1.00px;background:rgba(150,165,185,.2);"></div>
<div class="a" style="left:135.00px;top:650.00px;width:164.30px;height:1.00px;background:#e0e0e0;"></div>
<div class="a" style="left:299.30px;top:650.85px;width:1538.20px;height:1.00px;background:rgba(150,165,185,.2);"></div>
<div class="a" style="left:135.00px;top:678.00px;width:164.30px;height:1.00px;background:#e0e0e0;"></div>
<div class="a" style="left:299.30px;top:678.70px;width:1538.20px;height:1.00px;background:rgba(150,165,185,.2);"></div>
<div class="a" style="left:135.00px;top:706.00px;width:164.30px;height:1.00px;background:#e0e0e0;"></div>
<div class="a" style="left:299.30px;top:706.55px;width:1538.20px;height:1.00px;background:rgba(150,165,185,.2);"></div>
<div class="a" style="left:135.00px;top:734.00px;width:164.30px;height:1.00px;background:#e0e0e0;"></div>
<div class="a" style="left:299.30px;top:734.40px;width:1538.20px;height:1.00px;background:rgba(150,165,185,.2);"></div>
<div class="a" style="left:135.00px;top:815.00px;width:164.30px;height:1.00px;background:#e0e0e0;"></div>
<div class="a" style="left:299.30px;top:815.70px;width:1538.20px;height:1.00px;background:rgba(150,165,185,.2);"></div>
<div class="a" style="left:135.00px;top:843.00px;width:164.30px;height:1.00px;background:#e0e0e0;"></div>
<div class="a" style="left:299.30px;top:843.55px;width:1538.20px;height:1.00px;background:#e2e2e2;"></div>
<div class="a" style="left:135.00px;top:871.00px;width:164.30px;height:1.00px;background:#e0e0e0;"></div>
<div class="a" style="left:299.30px;top:871.40px;width:1538.20px;height:1.00px;background:#e2e2e2;"></div>
<div class="a" style="left:135.00px;top:899.00px;width:164.30px;height:1.00px;background:#e0e0e0;"></div>
<div class="a" style="left:299.30px;top:899.25px;width:1538.20px;height:1.00px;background:#e2e2e2;"></div>
<div class="a" style="left:135.00px;top:927.00px;width:164.30px;height:1.00px;background:#e0e0e0;"></div>
<div class="a" style="left:299.30px;top:927.10px;width:1538.20px;height:1.00px;background:#e2e2e2;"></div>
<div class="a" style="left:135.00px;top:954.00px;width:164.30px;height:1.00px;background:#e0e0e0;"></div>
<div class="a" style="left:299.30px;top:954.95px;width:1538.20px;height:1.00px;background:#e2e2e2;"></div>
<div class="a" style="left:135.00px;top:982.00px;width:164.30px;height:1.00px;background:#e0e0e0;"></div>
<div class="a" style="left:299.30px;top:982.80px;width:1538.20px;height:1.00px;background:#e2e2e2;"></div>
<div class="a" style="left:299.30px;top:215.35px;width:1538.20px;height:1.00px;background:rgba(255,255,255,.5);"></div>
<div class="a" style="left:299.30px;top:382.45px;width:1538.20px;height:1.00px;background:rgba(255,255,255,.5);"></div>
<div class="a" style="left:299.30px;top:410.30px;width:1538.20px;height:1.00px;background:rgba(255,255,255,.5);"></div>
<div class="a" style="left:299.30px;top:623.00px;width:1538.20px;height:1.00px;background:rgba(255,255,255,.5);"></div>
<div class="a" style="left:299.30px;top:650.85px;width:1538.20px;height:1.00px;background:rgba(255,255,255,.5);"></div>
<div class="a" style="left:299.30px;top:678.70px;width:1538.20px;height:1.00px;background:rgba(255,255,255,.5);"></div>
<div class="a" style="left:299.30px;top:706.55px;width:1538.20px;height:1.00px;background:rgba(255,255,255,.5);"></div>
<div class="a" style="left:357.80px;top:188.00px;width:1.00px;height:27.85px;background:rgba(255,255,255,.6);"></div>
<div class="a" style="left:604.50px;top:188.00px;width:1.00px;height:27.85px;background:rgba(255,255,255,.6);"></div>
<div class="a" style="left:666.90px;top:188.00px;width:1.00px;height:27.85px;background:rgba(255,255,255,.6);"></div>
<div class="a" style="left:861.80px;top:188.00px;width:1.00px;height:27.85px;background:rgba(255,255,255,.6);"></div>
<div class="a" style="left:977.80px;top:188.00px;width:1.00px;height:27.85px;background:rgba(255,255,255,.6);"></div>
<div class="a" style="left:1074.50px;top:188.00px;width:1.00px;height:27.85px;background:rgba(255,255,255,.6);"></div>
<div class="a" style="left:1153.80px;top:188.00px;width:1.00px;height:27.85px;background:rgba(255,255,255,.6);"></div>
<div class="a" style="left:1234.50px;top:188.00px;width:1.00px;height:27.85px;background:rgba(255,255,255,.6);"></div>
<div class="a" style="left:357.80px;top:215.85px;width:1.00px;height:27.85px;background:rgba(160,172,185,.3);"></div>
<div class="a" style="left:604.50px;top:215.85px;width:1.00px;height:27.85px;background:rgba(160,172,185,.3);"></div>
<div class="a" style="left:666.90px;top:215.85px;width:1.00px;height:27.85px;background:rgba(160,172,185,.3);"></div>
<div class="a" style="left:861.80px;top:215.85px;width:1.00px;height:27.85px;background:rgba(160,172,185,.3);"></div>
<div class="a" style="left:977.80px;top:215.85px;width:1.00px;height:27.85px;background:rgba(160,172,185,.3);"></div>
<div class="a" style="left:1074.50px;top:215.85px;width:1.00px;height:27.85px;background:rgba(160,172,185,.3);"></div>
<div class="a" style="left:1153.80px;top:215.85px;width:1.00px;height:27.85px;background:rgba(160,172,185,.3);"></div>
<div class="a" style="left:1234.50px;top:215.85px;width:1.00px;height:27.85px;background:rgba(160,172,185,.3);"></div>
<div class="a" style="left:357.80px;top:243.70px;width:1.00px;height:27.85px;background:rgba(160,172,185,.3);"></div>
<div class="a" style="left:604.50px;top:243.70px;width:1.00px;height:27.85px;background:rgba(160,172,185,.3);"></div>
<div class="a" style="left:666.90px;top:243.70px;width:1.00px;height:27.85px;background:rgba(160,172,185,.3);"></div>
<div class="a" style="left:861.80px;top:243.70px;width:1.00px;height:27.85px;background:rgba(160,172,185,.3);"></div>
<div class="a" style="left:977.80px;top:243.70px;width:1.00px;height:27.85px;background:rgba(160,172,185,.3);"></div>
<div class="a" style="left:1074.50px;top:243.70px;width:1.00px;height:27.85px;background:rgba(160,172,185,.3);"></div>
<div class="a" style="left:1153.80px;top:243.70px;width:1.00px;height:27.85px;background:rgba(160,172,185,.3);"></div>
<div class="a" style="left:1234.50px;top:243.70px;width:1.00px;height:27.85px;background:rgba(160,172,185,.3);"></div>
<div class="a" style="left:357.80px;top:271.55px;width:1.00px;height:27.85px;background:rgba(160,172,185,.3);"></div>
<div class="a" style="left:604.50px;top:271.55px;width:1.00px;height:27.85px;background:rgba(160,172,185,.3);"></div>
<div class="a" style="left:666.90px;top:271.55px;width:1.00px;height:27.85px;background:rgba(160,172,185,.3);"></div>
<div class="a" style="left:861.80px;top:271.55px;width:1.00px;height:27.85px;background:rgba(160,172,185,.3);"></div>
<div class="a" style="left:977.80px;top:271.55px;width:1.00px;height:27.85px;background:rgba(160,172,185,.3);"></div>
<div class="a" style="left:1074.50px;top:271.55px;width:1.00px;height:27.85px;background:rgba(160,172,185,.3);"></div>
<div class="a" style="left:1153.80px;top:271.55px;width:1.00px;height:27.85px;background:rgba(160,172,185,.3);"></div>
<div class="a" style="left:1234.50px;top:271.55px;width:1.00px;height:27.85px;background:rgba(160,172,185,.3);"></div>
<div class="a" style="left:357.80px;top:299.40px;width:1.00px;height:27.85px;background:rgba(160,172,185,.3);"></div>
<div class="a" style="left:604.50px;top:299.40px;width:1.00px;height:27.85px;background:rgba(160,172,185,.3);"></div>
<div class="a" style="left:666.90px;top:299.40px;width:1.00px;height:27.85px;background:rgba(160,172,185,.3);"></div>
<div class="a" style="left:861.80px;top:299.40px;width:1.00px;height:27.85px;background:rgba(160,172,185,.3);"></div>
<div class="a" style="left:977.80px;top:299.40px;width:1.00px;height:27.85px;background:rgba(160,172,185,.3);"></div>
<div class="a" style="left:1074.50px;top:299.40px;width:1.00px;height:27.85px;background:rgba(160,172,185,.3);"></div>
<div class="a" style="left:1153.80px;top:299.40px;width:1.00px;height:27.85px;background:rgba(160,172,185,.3);"></div>
<div class="a" style="left:1234.50px;top:299.40px;width:1.00px;height:27.85px;background:rgba(160,172,185,.3);"></div>
<div class="a" style="left:357.80px;top:327.25px;width:1.00px;height:27.85px;background:rgba(160,172,185,.3);"></div>
<div class="a" style="left:604.50px;top:327.25px;width:1.00px;height:27.85px;background:rgba(160,172,185,.3);"></div>
<div class="a" style="left:666.90px;top:327.25px;width:1.00px;height:27.85px;background:rgba(160,172,185,.3);"></div>
<div class="a" style="left:861.80px;top:327.25px;width:1.00px;height:27.85px;background:rgba(160,172,185,.3);"></div>
<div class="a" style="left:977.80px;top:327.25px;width:1.00px;height:27.85px;background:rgba(160,172,185,.3);"></div>
<div class="a" style="left:1074.50px;top:327.25px;width:1.00px;height:27.85px;background:rgba(160,172,185,.3);"></div>
<div class="a" style="left:1153.80px;top:327.25px;width:1.00px;height:27.85px;background:rgba(160,172,185,.3);"></div>
<div class="a" style="left:1234.50px;top:327.25px;width:1.00px;height:27.85px;background:rgba(160,172,185,.3);"></div>
<div class="a" style="left:357.80px;top:355.10px;width:1.00px;height:27.85px;background:rgba(160,172,185,.3);"></div>
<div class="a" style="left:604.50px;top:355.10px;width:1.00px;height:27.85px;background:rgba(160,172,185,.3);"></div>
<div class="a" style="left:666.90px;top:355.10px;width:1.00px;height:27.85px;background:rgba(160,172,185,.3);"></div>
<div class="a" style="left:861.80px;top:355.10px;width:1.00px;height:27.85px;background:rgba(160,172,185,.3);"></div>
<div class="a" style="left:977.80px;top:355.10px;width:1.00px;height:27.85px;background:rgba(160,172,185,.3);"></div>
<div class="a" style="left:1074.50px;top:355.10px;width:1.00px;height:27.85px;background:rgba(160,172,185,.3);"></div>
<div class="a" style="left:1153.80px;top:355.10px;width:1.00px;height:27.85px;background:rgba(160,172,185,.3);"></div>
<div class="a" style="left:1234.50px;top:355.10px;width:1.00px;height:27.85px;background:rgba(160,172,185,.3);"></div>
<div class="a" style="left:357.80px;top:382.95px;width:1.00px;height:27.85px;background:rgba(255,255,255,.6);"></div>
<div class="a" style="left:604.50px;top:382.95px;width:1.00px;height:27.85px;background:rgba(255,255,255,.6);"></div>
<div class="a" style="left:666.90px;top:382.95px;width:1.00px;height:27.85px;background:rgba(255,255,255,.6);"></div>
<div class="a" style="left:861.80px;top:382.95px;width:1.00px;height:27.85px;background:rgba(255,255,255,.6);"></div>
<div class="a" style="left:977.80px;top:382.95px;width:1.00px;height:27.85px;background:rgba(255,255,255,.6);"></div>
<div class="a" style="left:1074.50px;top:382.95px;width:1.00px;height:27.85px;background:rgba(255,255,255,.6);"></div>
<div class="a" style="left:1153.80px;top:382.95px;width:1.00px;height:27.85px;background:rgba(255,255,255,.6);"></div>
<div class="a" style="left:1234.50px;top:382.95px;width:1.00px;height:27.85px;background:rgba(255,255,255,.6);"></div>
<div class="a" style="left:357.80px;top:410.80px;width:1.00px;height:27.85px;background:rgba(160,172,185,.3);"></div>
<div class="a" style="left:604.50px;top:410.80px;width:1.00px;height:27.85px;background:rgba(160,172,185,.3);"></div>
<div class="a" style="left:666.90px;top:410.80px;width:1.00px;height:27.85px;background:rgba(160,172,185,.3);"></div>
<div class="a" style="left:861.80px;top:410.80px;width:1.00px;height:27.85px;background:rgba(160,172,185,.3);"></div>
<div class="a" style="left:977.80px;top:410.80px;width:1.00px;height:27.85px;background:rgba(160,172,185,.3);"></div>
<div class="a" style="left:1074.50px;top:410.80px;width:1.00px;height:27.85px;background:rgba(160,172,185,.3);"></div>
<div class="a" style="left:1153.80px;top:410.80px;width:1.00px;height:27.85px;background:rgba(160,172,185,.3);"></div>
<div class="a" style="left:1234.50px;top:410.80px;width:1.00px;height:27.85px;background:rgba(160,172,185,.3);"></div>
<div class="a" style="left:357.80px;top:438.65px;width:1.00px;height:27.85px;background:rgba(160,172,185,.3);"></div>
<div class="a" style="left:604.50px;top:438.65px;width:1.00px;height:27.85px;background:rgba(160,172,185,.3);"></div>
<div class="a" style="left:666.90px;top:438.65px;width:1.00px;height:27.85px;background:rgba(160,172,185,.3);"></div>
<div class="a" style="left:861.80px;top:438.65px;width:1.00px;height:27.85px;background:rgba(160,172,185,.3);"></div>
<div class="a" style="left:977.80px;top:438.65px;width:1.00px;height:27.85px;background:rgba(160,172,185,.3);"></div>
<div class="a" style="left:1074.50px;top:438.65px;width:1.00px;height:27.85px;background:rgba(160,172,185,.3);"></div>
<div class="a" style="left:1153.80px;top:438.65px;width:1.00px;height:27.85px;background:rgba(160,172,185,.3);"></div>
<div class="a" style="left:1234.50px;top:438.65px;width:1.00px;height:27.85px;background:rgba(160,172,185,.3);"></div>
<div class="a" style="left:357.80px;top:466.50px;width:1.00px;height:27.85px;background:rgba(160,172,185,.3);"></div>
<div class="a" style="left:604.50px;top:466.50px;width:1.00px;height:27.85px;background:rgba(160,172,185,.3);"></div>
<div class="a" style="left:666.90px;top:466.50px;width:1.00px;height:27.85px;background:rgba(160,172,185,.3);"></div>
<div class="a" style="left:861.80px;top:466.50px;width:1.00px;height:27.85px;background:rgba(160,172,185,.3);"></div>
<div class="a" style="left:977.80px;top:466.50px;width:1.00px;height:27.85px;background:rgba(160,172,185,.3);"></div>
<div class="a" style="left:1074.50px;top:466.50px;width:1.00px;height:27.85px;background:rgba(160,172,185,.3);"></div>
<div class="a" style="left:1153.80px;top:466.50px;width:1.00px;height:27.85px;background:rgba(160,172,185,.3);"></div>
<div class="a" style="left:1234.50px;top:466.50px;width:1.00px;height:27.85px;background:rgba(160,172,185,.3);"></div>
<div class="a" style="left:357.80px;top:494.35px;width:1.00px;height:27.85px;background:rgba(160,172,185,.3);"></div>
<div class="a" style="left:604.50px;top:494.35px;width:1.00px;height:27.85px;background:rgba(160,172,185,.3);"></div>
<div class="a" style="left:666.90px;top:494.35px;width:1.00px;height:27.85px;background:rgba(160,172,185,.3);"></div>
<div class="a" style="left:861.80px;top:494.35px;width:1.00px;height:27.85px;background:rgba(160,172,185,.3);"></div>
<div class="a" style="left:977.80px;top:494.35px;width:1.00px;height:27.85px;background:rgba(160,172,185,.3);"></div>
<div class="a" style="left:1074.50px;top:494.35px;width:1.00px;height:27.85px;background:rgba(160,172,185,.3);"></div>
<div class="a" style="left:1153.80px;top:494.35px;width:1.00px;height:27.85px;background:rgba(160,172,185,.3);"></div>
<div class="a" style="left:1234.50px;top:494.35px;width:1.00px;height:27.85px;background:rgba(160,172,185,.3);"></div>
<div class="a" style="left:357.80px;top:522.20px;width:1.00px;height:27.85px;background:rgba(160,172,185,.3);"></div>
<div class="a" style="left:604.50px;top:522.20px;width:1.00px;height:27.85px;background:rgba(160,172,185,.3);"></div>
<div class="a" style="left:666.90px;top:522.20px;width:1.00px;height:27.85px;background:rgba(160,172,185,.3);"></div>
<div class="a" style="left:861.80px;top:522.20px;width:1.00px;height:27.85px;background:rgba(160,172,185,.3);"></div>
<div class="a" style="left:977.80px;top:522.20px;width:1.00px;height:27.85px;background:rgba(160,172,185,.3);"></div>
<div class="a" style="left:1074.50px;top:522.20px;width:1.00px;height:27.85px;background:rgba(160,172,185,.3);"></div>
<div class="a" style="left:1153.80px;top:522.20px;width:1.00px;height:27.85px;background:rgba(160,172,185,.3);"></div>
<div class="a" style="left:1234.50px;top:522.20px;width:1.00px;height:27.85px;background:rgba(160,172,185,.3);"></div>
<div class="a" style="left:357.80px;top:550.05px;width:1.00px;height:27.85px;background:rgba(160,172,185,.3);"></div>
<div class="a" style="left:604.50px;top:550.05px;width:1.00px;height:27.85px;background:rgba(160,172,185,.3);"></div>
<div class="a" style="left:666.90px;top:550.05px;width:1.00px;height:27.85px;background:rgba(160,172,185,.3);"></div>
<div class="a" style="left:861.80px;top:550.05px;width:1.00px;height:27.85px;background:rgba(160,172,185,.3);"></div>
<div class="a" style="left:977.80px;top:550.05px;width:1.00px;height:27.85px;background:rgba(160,172,185,.3);"></div>
<div class="a" style="left:1074.50px;top:550.05px;width:1.00px;height:27.85px;background:rgba(160,172,185,.3);"></div>
<div class="a" style="left:1153.80px;top:550.05px;width:1.00px;height:27.85px;background:rgba(160,172,185,.3);"></div>
<div class="a" style="left:1234.50px;top:550.05px;width:1.00px;height:27.85px;background:rgba(160,172,185,.3);"></div>
<div class="a" style="left:357.80px;top:577.90px;width:1.00px;height:45.60px;background:rgba(160,172,185,.3);"></div>
<div class="a" style="left:604.50px;top:577.90px;width:1.00px;height:45.60px;background:rgba(160,172,185,.3);"></div>
<div class="a" style="left:666.90px;top:577.90px;width:1.00px;height:45.60px;background:rgba(160,172,185,.3);"></div>
<div class="a" style="left:861.80px;top:577.90px;width:1.00px;height:45.60px;background:rgba(160,172,185,.3);"></div>
<div class="a" style="left:977.80px;top:577.90px;width:1.00px;height:45.60px;background:rgba(160,172,185,.3);"></div>
<div class="a" style="left:1074.50px;top:577.90px;width:1.00px;height:45.60px;background:rgba(160,172,185,.3);"></div>
<div class="a" style="left:1153.80px;top:577.90px;width:1.00px;height:45.60px;background:rgba(160,172,185,.3);"></div>
<div class="a" style="left:1234.50px;top:577.90px;width:1.00px;height:45.60px;background:rgba(160,172,185,.3);"></div>
<div class="a" style="left:357.80px;top:623.50px;width:1.00px;height:27.85px;background:rgba(255,255,255,.6);"></div>
<div class="a" style="left:604.50px;top:623.50px;width:1.00px;height:27.85px;background:rgba(255,255,255,.6);"></div>
<div class="a" style="left:666.90px;top:623.50px;width:1.00px;height:27.85px;background:rgba(255,255,255,.6);"></div>
<div class="a" style="left:861.80px;top:623.50px;width:1.00px;height:27.85px;background:rgba(255,255,255,.6);"></div>
<div class="a" style="left:977.80px;top:623.50px;width:1.00px;height:27.85px;background:rgba(255,255,255,.6);"></div>
<div class="a" style="left:1074.50px;top:623.50px;width:1.00px;height:27.85px;background:rgba(255,255,255,.6);"></div>
<div class="a" style="left:1153.80px;top:623.50px;width:1.00px;height:27.85px;background:rgba(255,255,255,.6);"></div>
<div class="a" style="left:1234.50px;top:623.50px;width:1.00px;height:27.85px;background:rgba(255,255,255,.6);"></div>
<div class="a" style="left:357.80px;top:651.35px;width:1.00px;height:27.85px;background:rgba(255,255,255,.6);"></div>
<div class="a" style="left:604.50px;top:651.35px;width:1.00px;height:27.85px;background:rgba(255,255,255,.6);"></div>
<div class="a" style="left:666.90px;top:651.35px;width:1.00px;height:27.85px;background:rgba(255,255,255,.6);"></div>
<div class="a" style="left:861.80px;top:651.35px;width:1.00px;height:27.85px;background:rgba(255,255,255,.6);"></div>
<div class="a" style="left:977.80px;top:651.35px;width:1.00px;height:27.85px;background:rgba(255,255,255,.6);"></div>
<div class="a" style="left:1074.50px;top:651.35px;width:1.00px;height:27.85px;background:rgba(255,255,255,.6);"></div>
<div class="a" style="left:1153.80px;top:651.35px;width:1.00px;height:27.85px;background:rgba(255,255,255,.6);"></div>
<div class="a" style="left:1234.50px;top:651.35px;width:1.00px;height:27.85px;background:rgba(255,255,255,.6);"></div>
<div class="a" style="left:357.80px;top:679.20px;width:1.00px;height:27.85px;background:rgba(255,255,255,.6);"></div>
<div class="a" style="left:604.50px;top:679.20px;width:1.00px;height:27.85px;background:rgba(255,255,255,.6);"></div>
<div class="a" style="left:666.90px;top:679.20px;width:1.00px;height:27.85px;background:rgba(255,255,255,.6);"></div>
<div class="a" style="left:861.80px;top:679.20px;width:1.00px;height:27.85px;background:rgba(255,255,255,.6);"></div>
<div class="a" style="left:977.80px;top:679.20px;width:1.00px;height:27.85px;background:rgba(255,255,255,.6);"></div>
<div class="a" style="left:1074.50px;top:679.20px;width:1.00px;height:27.85px;background:rgba(255,255,255,.6);"></div>
<div class="a" style="left:1153.80px;top:679.20px;width:1.00px;height:27.85px;background:rgba(255,255,255,.6);"></div>
<div class="a" style="left:1234.50px;top:679.20px;width:1.00px;height:27.85px;background:rgba(255,255,255,.6);"></div>
<div class="a" style="left:357.80px;top:707.05px;width:1.00px;height:27.85px;background:#dedede;"></div>
<div class="a" style="left:604.50px;top:707.05px;width:1.00px;height:27.85px;background:#dedede;"></div>
<div class="a" style="left:666.90px;top:707.05px;width:1.00px;height:27.85px;background:#dedede;"></div>
<div class="a" style="left:861.80px;top:707.05px;width:1.00px;height:27.85px;background:#dedede;"></div>
<div class="a" style="left:977.80px;top:707.05px;width:1.00px;height:27.85px;background:#dedede;"></div>
<div class="a" style="left:1074.50px;top:707.05px;width:1.00px;height:27.85px;background:#dedede;"></div>
<div class="a" style="left:1153.80px;top:707.05px;width:1.00px;height:27.85px;background:#dedede;"></div>
<div class="a" style="left:1234.50px;top:707.05px;width:1.00px;height:27.85px;background:#dedede;"></div>
<div class="a" style="left:357.80px;top:734.90px;width:1.00px;height:81.30px;background:#dedede;"></div>
<div class="a" style="left:604.50px;top:734.90px;width:1.00px;height:81.30px;background:#dedede;"></div>
<div class="a" style="left:666.90px;top:734.90px;width:1.00px;height:81.30px;background:#dedede;"></div>
<div class="a" style="left:861.80px;top:734.90px;width:1.00px;height:81.30px;background:#dedede;"></div>
<div class="a" style="left:977.80px;top:734.90px;width:1.00px;height:81.30px;background:#dedede;"></div>
<div class="a" style="left:1074.50px;top:734.90px;width:1.00px;height:81.30px;background:#dedede;"></div>
<div class="a" style="left:1153.80px;top:734.90px;width:1.00px;height:81.30px;background:#dedede;"></div>
<div class="a" style="left:1234.50px;top:734.90px;width:1.00px;height:81.30px;background:#dedede;"></div>
<div class="a" style="left:357.80px;top:816.20px;width:1.00px;height:169.30px;background:#dedede;"></div>
<div class="a" style="left:604.50px;top:816.20px;width:1.00px;height:169.30px;background:#dedede;"></div>
<div class="a" style="left:666.90px;top:816.20px;width:1.00px;height:169.30px;background:#dedede;"></div>
<div class="a" style="left:861.80px;top:816.20px;width:1.00px;height:169.30px;background:#dedede;"></div>
<div class="a" style="left:977.80px;top:816.20px;width:1.00px;height:169.30px;background:#dedede;"></div>
<div class="a" style="left:1074.50px;top:816.20px;width:1.00px;height:169.30px;background:#dedede;"></div>
<div class="a" style="left:1153.80px;top:816.20px;width:1.00px;height:169.30px;background:#dedede;"></div>
<div class="a" style="left:1234.50px;top:816.20px;width:1.00px;height:169.30px;background:#dedede;"></div>
<div class="a" style="left:298.70px;top:188.00px;width:1.20px;height:797.50px;background:#d6d6d6;"></div>
<div class="a" style="left:1328.00px;top:707.05px;width:1.00px;height:278.45px;background:#e6e6e6;"></div>
<div class="a" style="left:1390.40px;top:707.05px;width:1.00px;height:278.45px;background:#e6e6e6;"></div>
<div class="a" style="left:1452.80px;top:707.05px;width:1.00px;height:278.45px;background:#e6e6e6;"></div>
<div class="a" style="left:1515.20px;top:707.05px;width:1.00px;height:278.45px;background:#e6e6e6;"></div>
<div class="a" style="left:1577.60px;top:707.05px;width:1.00px;height:278.45px;background:#e6e6e6;"></div>
<div class="a" style="left:1640.00px;top:707.05px;width:1.00px;height:278.45px;background:#e6e6e6;"></div>
<div class="a" style="left:1702.40px;top:707.05px;width:1.00px;height:278.45px;background:#e6e6e6;"></div>
<div class="a" style="left:1764.80px;top:707.05px;width:1.00px;height:278.45px;background:#e6e6e6;"></div>
<div class="a" style="left:1827.20px;top:707.05px;width:1.00px;height:278.45px;background:#e6e6e6;"></div>
<div class="a" style="left:1568.80px;top:707.05px;width:1.00px;height:278.45px;background:#cfcfcf;"></div>
<div class="a" style="left:1826.80px;top:707.05px;width:1.00px;height:278.45px;background:#cfcfcf;"></div>
<div class="a" style="left:135.00px;top:187.30px;width:1719.00px;height:1.70px;background:#3566ad;"></div>
<svg class="a" style="left:211.50px;top:222.50px;" width="13" height="17" viewBox="0 0 13 17" ><path d="M10.300 4.500v7.300a3.800 3.800 0 01-7.600 0V4.200a2.500 2.500 0 015 0v7.200a1.200 1.200 0 01-2.400 0V5.200" fill="#dfe9fb" stroke="#2c5fae" stroke-width="1.500" stroke-linecap="round"/></svg>
<svg class="a" style="left:233.50px;top:224.00px;" width="15" height="14.5" viewBox="0 0 15 14.5" ><path d="M1.700 1h11.600c.500 0 .900.400.900.900v7.200c0 .500-.400.900-.900.900H8.300l-2.800 2.800V10H1.700c-.500 0-.900-.400-.900-.900V1.900c0-.500.400-.900.900-.900z" fill="#dfe9fb" stroke="#2c5fae" stroke-width="1.500" stroke-linejoin="round"/></svg>
<div class="a" style="left:1569.70px;top:195.20px;width:267.80px;height:11.60px;background:#cdcdcd;border-top:1px solid #b3b3b3;border-bottom:1px solid #b9b9b9;"></div>
<svg class="a" style="left:1569.70px;top:206.30px;" width="5" height="7" viewBox="0 0 5 7" ><path d="M0 0h4.500L0.600 6.500H0z" fill="#c4c4c4"/></svg>
<div class="a" style="left:1569.70px;top:195.20px;width:1.00px;height:17.60px;background:#b0b0b0;"></div>
<div class="a" style="left:1571.20px;top:197.70px;width:155.80px;height:6.60px;background:#ececec;border:1px solid #d9d9d9;"></div>
<div class="a" style="left:1569.70px;top:222.70px;width:267.80px;height:11.60px;background:#cdcdcd;border-top:1px solid #b3b3b3;border-bottom:1px solid #b9b9b9;"></div>
<svg class="a" style="left:1569.70px;top:233.80px;" width="5" height="7" viewBox="0 0 5 7" ><path d="M0 0h4.500L0.600 6.500H0z" fill="#c4c4c4"/></svg>
<div class="a" style="left:1569.70px;top:222.70px;width:1.00px;height:17.60px;background:#b0b0b0;"></div>
<div class="a" style="left:1571.20px;top:225.20px;width:213.20px;height:6.60px;background:#ececec;border:1px solid #d9d9d9;"></div>
<div class="a" style="left:1569.70px;top:250.60px;width:115.80px;height:15.00px;background:#d596d9;"></div>
<div class="a" style="left:1570.70px;top:255.60px;width:113.80px;height:5.60px;background:#efc9f1;"></div>
<div class="a" style="left:1686.00px;top:278.30px;width:151.50px;height:15.50px;background:#d596d9;"></div>
<div class="a" style="left:1687.00px;top:282.80px;width:91.00px;height:6.30px;background:#efc9f1;"></div>
<svg class="a" style="left:1684.00px;top:259.00px;" width="10" height="18" viewBox="0 0 10 18" ><path d="M1.500 2.500h4.300v10" fill="none" stroke="#444" stroke-width="1.300"/><path d="M3 11.800h5.600L5.800 16.500z" fill="#444"/></svg>
<div class="a" style="left:1290.50px;top:127.00px;width:2.00px;height:858.50px;background:#9e9e9e;"></div>
<div class="a" style="left:1292.50px;top:188.50px;width:1.00px;height:797.00px;background:rgba(255,255,255,.55);"></div>
<div class="a" style="left:1837.50px;top:188.40px;width:16.50px;height:797.10px;background:#fafafa;"></div>
<div class="a" style="left:1842.30px;top:193.00px;width:8.50px;height:792.50px;background:#a9a9a9;border-radius:4.200px 4.200px 0 0;"></div>
<div class="a" style="left:1854.00px;top:117.40px;width:59.00px;height:868.10px;background:#fff;border-left:1px solid #dcdcdc;"></div>
<svg class="a" style="left:1871.30px;top:132.70px;" width="26" height="26" viewBox="0 0 26 26" fill="none" stroke="#444" stroke-width="1.8" stroke-linecap="round" stroke-linejoin="round"><path d="M3 4h20c.500 0 .800.300.800.800v14.400c0 .500-.300.800-.800.800H10.500l-2.700 2.600c-.300.300-.800.100-.800-.300V20H3c-.500 0-.800-.300-.800-.800V4.800c0-.500.300-.800.800-.800z"/></svg>
<svg class="a" style="left:1871.30px;top:186.15px;" width="26" height="26" viewBox="0 0 26 26" fill="none" stroke="#444" stroke-width="1.7" stroke-linecap="round" stroke-linejoin="round"><g transform="rotate(-42 13 13)"><path d="M6.800 17.300H6.400a4.300 4.300 0 010-8.600h13.400a4.300 4.300 0 010 8.600h-8.300a2.200 2.200 0 010-4.400h7.200"/></g></svg>
<svg class="a" style="left:1871.30px;top:239.60px;" width="26" height="26" viewBox="0 0 26 26" fill="none" stroke="#444" stroke-width="1.8" stroke-linecap="round" stroke-linejoin="round"><path d="M7 2.500h12M5 6h16"/><path d="M3.500 9.500h19c.600 0 1 .400 1 1v8l-4.500 4.500H3.500c-.600 0-1-.400-1-1v-11.500c0-.600.400-1 1-1z"/><path d="M23.500 18.500h-3.500c-.600 0-1 .400-1 1V23"/></svg>
<svg class="a" style="left:1871.30px;top:293.05px;" width="26" height="26" viewBox="0 0 26 26" fill="none" stroke="#444" stroke-width="1.8" stroke-linecap="round" stroke-linejoin="round"><path d="M16 3H3.500v20H16"/><path d="M20 4v9.500M17.300 11l2.700 2.800 2.700-2.800" /><path d="M8.500 8h3.200c1.500 0 2.500.900 2.500 2.200s-1 2.300-2.500 2.300H8.500zM8.500 12.500h3.700c1.600 0 2.700 1 2.700 2.500s-1.100 2.500-2.700 2.500H8.500z" stroke-width="1.700"/></svg>
<svg class="a" style="left:1871.30px;top:346.50px;" width="26" height="26" viewBox="0 0 26 26" fill="none" stroke="#444" stroke-width="1.8" stroke-linecap="round" stroke-linejoin="round"><path d="M4.200 10.200A9.200 9.200 0 0120.500 7M21.800 15.800A9.200 9.200 0 015.500 19"/><path d="M21 2.800V7.300h-4.500M5 23.200v-4.500h4.500"/><path d="M9 13.200l3 3 5.200-5.600"/></svg>
<svg class="a" style="left:1871.30px;top:399.95px;" width="26" height="26" viewBox="0 0 26 26" fill="none" stroke="#444" stroke-width="1.8" stroke-linecap="round" stroke-linejoin="round"><path d="M6 2.500h9.500l5.500 5.500v14.500c0 .600-.400 1-1 1H6c-.600 0-1-.400-1-1v-19c0-.600.400-1 1-1z"/><path d="M15.500 2.500V8H21"/><path d="M13 19v-7.500M9.800 14.200L13 11l3.200 3.200"/></svg>
<svg class="a" style="left:1871.30px;top:453.40px;" width="26" height="26" viewBox="0 0 26 26" fill="none" stroke="#444" stroke-width="1.8" stroke-linecap="round" stroke-linejoin="round"><circle cx="13" cy="13" r="10.200"/><path d="M5.500 13.500h4l2-4 3 7.500 2-3.500h4"/></svg>
<svg class="a" style="left:1871.30px;top:506.85px;" width="26" height="26" viewBox="0 0 26 26" fill="none" stroke="#444" stroke-width="1.8" stroke-linecap="round" stroke-linejoin="round"><path d="M9 3h12.500c.600 0 1 .400 1 1v13.500l-5 5H9c-.600 0-1-.400-1-1V4c0-.600.400-1 1-1z"/><path d="M22.500 17.500h-4c-.600 0-1 .400-1 1v4"/><path d="M8 6.500H3.500v13H8"/><path d="M4.800 10.500h1.700M4.800 13h1.700M4.800 15.500h1.700" stroke-width="1.300"/></svg>
<svg class="a" style="left:1871.30px;top:560.30px;" width="26" height="26" viewBox="0 0 26 26" fill="none" stroke="#444" stroke-width="1.8" stroke-linecap="round" stroke-linejoin="round"><circle cx="8" cy="7" r="3.200"/><path d="M2.500 21v-2.500c0-3 2.400-5 5.500-5 1.200 0 2.300.300 3.200.900"/><rect x="14.500" y="5" width="9.500" height="4" rx=".8"/><rect x="14.500" y="14" width="7" height="4" rx=".8"/></svg>
<svg class="a" style="left:1871.30px;top:613.75px;" width="26" height="26" viewBox="0 0 26 26" fill="none" stroke="#444" stroke-width="1.8" stroke-linecap="round" stroke-linejoin="round"><rect x="3" y="3" width="20" height="20" rx="1.200"/><path d="M8 18.500v-5M11.400 18.500V8M14.800 18.500v-7.500M18.200 18.500v-3.500"/></svg>
<svg class="a" style="left:1871.30px;top:667.20px;" width="26" height="26" viewBox="0 0 26 26" fill="none" stroke="#444" stroke-width="1.8" stroke-linecap="round" stroke-linejoin="round"><path d="M2.500 23.500l4.200-4.200M19.300 6.700l4.200-4.200"/><path d="M8.300 11.200l6.500 6.500-1.800 1.800a4.600 4.600 0 01-6.500-6.500z"/><path d="M17.700 14.800l-6.500-6.500L13 6.500a4.600 4.600 0 016.500 6.500z"/></svg>
<svg class="a" style="left:1866px;top:714px" width="36" height="36" viewBox="1866 714 36 36"><path d="M1881.30 727.10C1882.31 733.06 1884.54 735.29 1890.50 736.30C1884.54 737.31 1882.31 739.54 1881.30 745.50C1880.29 739.54 1878.06 737.31 1872.10 736.30C1878.06 735.29 1880.29 733.06 1881.30 727.10z" fill="#3c3c3c"/><path d="M1891.90 719.80C1892.54 723.56 1893.94 724.96 1897.70 725.60C1893.94 726.24 1892.54 727.64 1891.90 731.40C1891.26 727.64 1889.86 726.24 1886.10 725.60C1889.86 724.96 1891.26 723.56 1891.90 719.80z" fill="#3c3c3c"/></svg>
<div class="a" style="left:7.00px;top:985.50px;width:1906.00px;height:447.50px;background:#fff;"></div>
<div class="a" style="left:63.00px;top:823.00px;width:845.50px;height:570.50px;background:#b5b4ea;box-shadow:0 0 4px 2px #b5b4ea;"></div>
<div class="a" style="left:47px;top:805.5px;width:845px;height:572.0px;background:#f6f6fb;overflow:hidden">
<div class="a" style="left:-47px;top:-805.5px;width:1920px;height:1440px">
<div class="a" style="left:58.80px;top:818.00px;width:22.50px;height:22.50px;background:#dcd0fb;border-radius:5px;"></div>
<svg class="a" style="left:65.00px;top:824.20px;" width="10.2" height="10.2" viewBox="0 0 11 11" ><path d="M2.600 1h5.800c.900 0 1.600.700 1.600 1.600v3.900L6.500 10H2.600C1.700 10 1 9.300 1 8.400V2.600C1 1.700 1.700 1 2.600 1z" fill="none" stroke="#2c2c6a" stroke-width="1.250" stroke-linejoin="round"/><path d="M10 6.300H7.700c-.700 0-1.200.500-1.200 1.200V10" fill="none" stroke="#2c2c6a" stroke-width="1.100"/></svg>
<span class="t" style="top:822.35px;font-size:13.3px;color:#3a3a3e;font-weight:bold;letter-spacing:-0.216px;left:88.80px;">Project Timeline Template</span>
<svg class="a" style="left:253.50px;top:820.30px;" width="17" height="17" viewBox="0 0 16 16" ><path d="M8 1.600l1.950 4.100 4.450.600-3.250 3.150.800 4.450L8 11.750 4.050 13.900l.800-4.450L1.600 6.300l4.450-.600z" fill="none" stroke="#686870" stroke-width="1" stroke-linejoin="round"/></svg>
<div class="a" style="left:278.30px;top:819.30px;width:103.00px;height:19.50px;background:#fbfbfe;border:1px solid #a2a2aa;border-radius:5px;"></div>
<svg class="a" style="left:282.60px;top:823.55px;" width="11" height="11" viewBox="0 0 11 11" ><circle cx="5.500" cy="5.500" r="4.600" fill="none" stroke="#444" stroke-width="1"/><path d="M4.100 4.400c0-.800.600-1.300 1.400-1.300s1.400.500 1.400 1.200c0 1-1.400 1-1.400 2.100" fill="none" stroke="#444" stroke-width="1" stroke-linecap="round"/><circle cx="5.500" cy="8" r=".6" fill="#444"/></svg>
<span class="t" style="top:823.95px;font-size:10.6px;color:#4a4a50;font-weight:bold;letter-spacing:-0.614px;left:298.80px;">Help &amp; Feedback</span>
<svg class="a" style="left:390.50px;top:822.00px;" width="17" height="15" viewBox="0 0 17 15" ><path d="M4.600 12.800A3.300 3.300 0 014 6.300 4.600 4.600 0 0112.800 5a3.900 3.900 0 01.300 7.800z" fill="none" stroke="#444" stroke-width="1.100" stroke-linejoin="round"/><path d="M6.400 8.600l1.700 1.700 3-3.200" fill="none" stroke="#444" stroke-width="1.100" stroke-linecap="round" stroke-linejoin="round"/></svg>
<div class="a" style="left:58.80px;top:852.50px;width:840.00px;height:30.00px;background:#fff;border-radius:6px 0 0 6px;"></div>
<div class="a" style="left:63.00px;top:858.80px;width:62.80px;height:18.30px;background:#e5e6f1;border-radius:4px;"></div>
<svg class="a" style="left:66.60px;top:862.00px;" width="12" height="12" viewBox="0 0 12 12" fill="none" stroke="#4f4f57" stroke-width="1.15" stroke-linecap="round" stroke-linejoin="round"><rect x="1" y="1.500" width="10" height="9" rx="1.500"/><path d="M1 4.500h10M1 7.500h10M4.500 1.500v9M8 1.500v9" stroke-width=".9"/></svg>
<span class="t" style="top:862.80px;font-size:10.4px;color:#4f4f57;font-weight:bold;letter-spacing:-0.478px;left:83.00px;">Table</span>
<svg class="a" style="left:114.00px;top:866.10px;" width="7" height="4.4" viewBox="0 0 7 4.4" ><path d="M0.700 0.700L3.500 3.500 6.300 0.700" fill="none" stroke="#4f4f57" stroke-width="1.200" stroke-linecap="round" stroke-linejoin="round"/></svg>
<div class="a" style="left:132.00px;top:852.50px;width:1.00px;height:30.00px;background:#ececf3;"></div>
<div class="a" style="left:184.00px;top:852.50px;width:1.00px;height:30.00px;background:#ececf3;"></div>
<div class="a" style="left:216.50px;top:852.50px;width:1.00px;height:30.00px;background:#ececf3;"></div>
<div class="a" style="left:279.00px;top:852.50px;width:1.00px;height:30.00px;background:#ececf3;"></div>
<div class="a" style="left:436.30px;top:852.50px;width:1.00px;height:30.00px;background:#ececf3;"></div>
<div class="a" style="left:517.00px;top:852.50px;width:1.00px;height:30.00px;background:#ececf3;"></div>
<div class="a" style="left:572.00px;top:852.50px;width:1.00px;height:30.00px;background:#ececf3;"></div>
<svg class="a" style="left:142.80px;top:862.00px;" width="12" height="12" viewBox="0 0 12 12" fill="none" stroke="#4f4f57" stroke-width="1.15" stroke-linecap="round" stroke-linejoin="round"><path d="M2 4.200h5.200a3 3 0 010 6H5.500"/><path d="M4.300 1.800L1.900 4.200l2.400 2.400"/></svg>
<svg class="a" style="left:162.80px;top:862.00px;" width="12" height="12" viewBox="0 0 12 12" fill="none" stroke="#8c8c95" stroke-width="1.15" stroke-linecap="round" stroke-linejoin="round"><path d="M10 4.200H4.800a3 3 0 000 6h1.700"/><path d="M7.700 1.800l2.400 2.400-2.400 2.400"/></svg>
<svg class="a" style="left:194.50px;top:862.00px;" width="12" height="12" viewBox="0 0 12 12" fill="none" stroke="#4f4f57" stroke-width="1.15" stroke-linecap="round" stroke-linejoin="round"><circle cx="5.300" cy="5.300" r="3.700"/><path d="M8.100 8.100l2.900 2.900"/></svg>
<svg class="a" style="left:226.50px;top:862.00px;" width="12" height="12" viewBox="0 0 12 12" fill="none" stroke="#4f4f57" stroke-width="1.15" stroke-linecap="round" stroke-linejoin="round"><path d="M1.200 1.600h9.600L7.200 6.200v3.600L4.800 11V6.200z"/></svg>
<span class="t" style="top:862.80px;font-size:10.4px;color:#4f4f57;font-weight:bold;letter-spacing:-0.288px;left:243.80px;">Filter</span>
<svg class="a" style="left:289.50px;top:862.00px;" width="12" height="12" viewBox="0 0 12 12" fill="none" stroke="#4f4f57" stroke-width="1.15" stroke-linecap="round" stroke-linejoin="round"><path d="M5 1.300l3.900 3.900-3.300 3.300c-.500.500-1.300.500-1.800 0L1.700 6.400c-.500-.500-.500-1.300 0-1.800z"/><path d="M1.500 5.500h7"/><circle cx="10" cy="9.600" r="1.200"/></svg>
<span class="t" style="top:862.80px;font-size:10.4px;color:#4f4f57;font-weight:bold;letter-spacing:-0.458px;left:306.30px;">Format</span>
<svg class="a" style="left:351.50px;top:862.00px;" width="12" height="12" viewBox="0 0 12 12" fill="none" stroke="#4f4f57" stroke-width="1.15" stroke-linecap="round" stroke-linejoin="round"><rect x="1" y="1.500" width="10" height="9" rx="1.500"/><path d="M1 4.500h10M1 7.500h10M4.500 1.500v9" stroke-width=".9"/><rect x="1.500" y="5" width="2.600" height="2.200" fill="#4f4f57" stroke="none"/><rect x="5" y="2" width="5.500" height="2.200" fill="#4f4f57" stroke="none"/></svg>
<span class="t" style="top:862.80px;font-size:10.4px;color:#4f4f57;font-weight:bold;letter-spacing:-0.500px;left:368.00px;">Format rules</span>
<svg class="a" style="left:446.50px;top:862.00px;" width="12" height="12" viewBox="0 0 12 12" fill="none" stroke="#4f4f57" stroke-width="1.15" stroke-linecap="round" stroke-linejoin="round"><path d="M7.600 1.600c-1.600-.400-2.400.400-2.600 1.800L4 10c-.200 1.200-1 1.600-2 1.200M2.800 5h4"/><path d="M7.600 7.600l3 3M10.600 7.600l-3 3" stroke-width="1"/></svg>
<span class="t" style="top:862.80px;font-size:10.4px;color:#4f4f57;font-weight:bold;letter-spacing:-0.701px;left:463.80px;">Formulas</span>
<svg class="a" style="left:527.00px;top:862.00px;" width="12" height="12" viewBox="0 0 12 12" fill="none" stroke="#4f4f57" stroke-width="1.15" stroke-linecap="round" stroke-linejoin="round"><path d="M2.300 1.800h7.400c.700 0 1.300.600 1.300 1.300v4.300c0 .700-.600 1.300-1.300 1.300H5.800L3.500 10.600V8.700H2.300C1.600 8.700 1 8.100 1 7.400V3.100c0-.700.600-1.300 1.300-1.300z"/></svg>
<svg class="a" style="left:550.00px;top:862.00px;" width="12" height="12" viewBox="0 0 12 12" fill="none" stroke="#4f4f57" stroke-width="1.15" stroke-linecap="round" stroke-linejoin="round"><path d="M8.600 3.400v4.800a2.600 2.600 0 01-5.200 0V3.200a1.700 1.700 0 013.400 0v4.900a.85.85 0 01-1.700 0V3.800"/></svg>
<svg class="a" style="left:582.00px;top:862.00px;" width="12" height="12" viewBox="0 0 12 12" fill="none" stroke="#4f4f57" stroke-width="1.15" stroke-linecap="round" stroke-linejoin="round"><rect x="2.200" y="2.200" width="7.600" height="8.800" rx="1.200"/><path d="M4.300 2.200V1.400h3.400v.8M4.200 5.200h3.600M4.200 7.200h3.600M4.200 9.200h2"/></svg>
<span class="t" style="top:862.80px;font-size:10.4px;color:#4f4f57;font-weight:bold;letter-spacing:-0.757px;left:599.00px;">Forms</span>
<svg class="a" style="left:631.00px;top:866.10px;" width="7" height="4.4" viewBox="0 0 7 4.4" ><path d="M0.700 0.700L3.500 3.500 6.300 0.700" fill="none" stroke="#4f4f57" stroke-width="1.200" stroke-linecap="round" stroke-linejoin="round"/></svg>
<svg class="a" style="left:649.50px;top:862.00px;" width="12" height="12" viewBox="0 0 12 12" fill="none" stroke="#4f4f57" stroke-width="1.15" stroke-linecap="round" stroke-linejoin="round"><path d="M7 .8L3 6.600h3L5 11.200l4-5.800H6z"/></svg>
<span class="t" style="top:862.80px;font-size:10.4px;color:#4f4f57;font-weight:bold;letter-spacing:-0.414px;left:666.00px;">Automations</span>
<svg class="a" style="left:737.80px;top:862.00px;" width="12" height="12" viewBox="0 0 12 12" fill="none" stroke="#4f4f57" stroke-width="1.15" stroke-linecap="round" stroke-linejoin="round"><circle cx="3.600" cy="8.400" r="2.300"/><circle cx="8.400" cy="3.600" r="2.300"/><path d="M5.300 6.700l1.400-1.400"/><path d="M8.200 8.200h2.400v2.400M1.400 3.800V1.400h2.400" stroke-width=".9"/></svg>
<span class="t" style="top:862.80px;font-size:10.4px;color:#4f4f57;font-weight:bold;letter-spacing:-0.338px;left:753.80px;">Data Integrations</span>
<svg class="a" style="left:837.00px;top:866.10px;" width="7" height="4.4" viewBox="0 0 7 4.4" ><path d="M0.700 0.700L3.500 3.500 6.300 0.700" fill="none" stroke="#4f4f57" stroke-width="1.200" stroke-linecap="round" stroke-linejoin="round"/></svg>
<svg class="a" style="left:855.80px;top:862.00px;" width="12" height="12" viewBox="0 0 12 12" fill="none" stroke="#4f4f57" stroke-width="1.15" stroke-linecap="round" stroke-linejoin="round"><rect x="1.200" y="5.600" width="2.400" height="5.200" rx=".6"/><rect x="4.800" y="1.400" width="2.400" height="9.400" rx=".6"/><rect x="8.400" y="7.200" width="2.400" height="3.600" rx=".6"/></svg>
<span class="t" style="top:862.80px;font-size:10.4px;color:#4f4f57;font-weight:bold;letter-spacing:-0.395px;left:872.50px;">Analyze Data</span>
<div class="a" style="left:58.80px;top:886.00px;width:840.00px;height:500.00px;background:#fff;"></div>
<span class="t" style="top:896.65px;font-size:10.3px;color:#26262b;font-weight:bold;letter-spacing:0.175px;left:232.30px;">Task Name</span>
<div class="a" style="left:393px;top:894px;width:32.5px;height:16px;overflow:hidden"><span class="t" style="top:2.65px;font-size:10.3px;color:#26262b;font-weight:bold;letter-spacing:-0.070px;left:0.00px;">Priority</span></div>
<span class="t" style="top:896.65px;font-size:10.3px;color:#26262b;font-weight:bold;letter-spacing:-0.095px;left:433.80px;">Assigned To</span>
<span class="t" style="top:896.65px;font-size:10.3px;color:#26262b;font-weight:bold;letter-spacing:-0.080px;left:559.50px;">Begin Date</span>
<span class="t" style="top:896.65px;font-size:10.3px;color:#26262b;font-weight:bold;letter-spacing:-0.105px;left:634.30px;">End Date</span>
<span class="t" style="top:896.65px;font-size:10.3px;color:#26262b;font-weight:bold;letter-spacing:-0.043px;left:696.80px;">Duration</span>
<span class="t" style="top:896.65px;font-size:10.3px;color:#26262b;font-weight:bold;left:748.00px;">%</span>
<span class="t" style="top:909.45px;font-size:10.3px;color:#26262b;font-weight:bold;letter-spacing:-0.188px;left:748.00px;">Done</span>
<span class="t" style="top:896.65px;font-size:10.3px;color:#26262b;font-weight:bold;letter-spacing:0.036px;left:800.00px;">Predecessors</span>
<div class="a" style="left:178.80px;top:943.00px;width:710.00px;height:20.80px;background:#14377f;"></div>
<div class="a" style="left:60.00px;top:963.30px;width:118.80px;height:1.00px;background:#e4e4ea;"></div>
<span class="t" style="top:949.00px;font-size:9.6px;color:#7c8190;left:64.60px;">1</span>
<span class="t" style="top:949.08px;font-size:10.05px;color:#fff;font-weight:bold;left:252.50px;">PROJECT A</span>
<svg class="a" style="left:235.00px;top:947.40px;" width="12" height="12" viewBox="0 0 12 12" ><rect x="0.300" y="0.300" width="11.400" height="11.400" rx="3.200" fill="#fbfbfd"/><path d="M3.600 5l2.400 2.800L8.400 5z" fill="#222"/></svg>
<span class="t" style="top:949.08px;font-size:10.05px;color:#fff;font-weight:bold;left:560.00px;">02/01/20</span>
<span class="t" style="top:949.08px;font-size:10.05px;color:#fff;font-weight:bold;left:635.00px;">03/26/20</span>
<span class="t" style="top:949.08px;font-size:10.05px;color:#fff;font-weight:bold;left:712.18px;">40d</span>
<span class="t" style="top:949.08px;font-size:10.05px;color:#fff;font-weight:bold;left:761.89px;">32%</span>
<div class="a" style="left:178.80px;top:963.80px;width:710.00px;height:20.70px;background:#bdddfc;"></div>
<div class="a" style="left:60.00px;top:984.00px;width:118.80px;height:1.00px;background:#e4e4ea;"></div>
<span class="t" style="top:969.80px;font-size:9.6px;color:#7c8190;left:64.60px;">2</span>
<div class="a" style="left:189.60px;top:969.00px;width:10.80px;height:10.80px;background:#2a8c35;border-radius:50%;"></div>
<span class="t" style="top:969.88px;font-size:10.05px;color:#16161c;font-weight:bold;left:269.50px;">Phase 1</span>
<svg class="a" style="left:252.00px;top:968.20px;" width="12" height="12" viewBox="0 0 12 12" ><rect x="0.300" y="0.300" width="11.400" height="11.400" rx="3.200" fill="rgba(255,255,255,.45)"/><path d="M3.600 5l2.400 2.800L8.400 5z" fill="#222"/></svg>
<div class="a" style="left:441.30px;top:967.40px;width:78.28px;height:13.60px;background:rgba(150,160,190,.32);border-radius:7px;"></div>
<div class="a" style="left:434.30px;top:967.20px;width:14.00px;height:14.00px;background:#dfa3e3;border-radius:50%;"></div>
<div class="a" style="left:438.10px;top:972.80px;width:6.40px;height:2.80px;background:#8a2c90;border-radius:1px;opacity:.8;"></div>
<span class="t" style="top:970.08px;font-size:10.05px;color:#16161c;font-weight:bold;left:453.00px;">Bob Thorton</span>
<span class="t" style="top:969.88px;font-size:10.05px;color:#44546e;left:560.00px;">02/01/20</span>
<span class="t" style="top:969.88px;font-size:10.05px;color:#44546e;left:635.00px;">03/19/20</span>
<span class="t" style="top:969.88px;font-size:10.05px;color:#44546e;left:712.73px;">35d</span>
<span class="t" style="top:969.88px;font-size:10.05px;color:#44546e;left:761.89px;">50%</span>
<div class="a" style="left:178.80px;top:984.50px;width:710.00px;height:20.90px;background:#e1efff;"></div>
<div class="a" style="left:60.00px;top:1004.90px;width:118.80px;height:1.00px;background:#e4e4ea;"></div>
<span class="t" style="top:990.50px;font-size:9.6px;color:#7c8190;left:64.60px;">3</span>
<div class="a" style="left:189.60px;top:989.70px;width:10.80px;height:10.80px;background:#2f6fe2;border-radius:50%;"></div>
<span class="t" style="top:990.58px;font-size:10.05px;color:#2b2b30;left:286.80px;">Project Charter</span>
<span class="t" style="top:989.60px;font-size:12px;color:#e0453c;font-weight:bold;left:398.80px;">!</span>
<div class="a" style="left:441.30px;top:988.10px;width:72.55px;height:13.60px;background:rgba(150,160,190,.32);border-radius:7px;"></div>
<div class="a" style="left:434.30px;top:987.90px;width:14.00px;height:14.00px;background:#36c455;border-radius:50%;"></div>
<div class="a" style="left:438.10px;top:993.50px;width:6.40px;height:2.80px;background:#145c22;border-radius:1px;opacity:.8;"></div>
<span class="t" style="top:990.78px;font-size:10.05px;color:#2b2b30;left:453.00px;">Abby Wright</span>
<span class="t" style="top:990.58px;font-size:10.05px;color:#2b2b30;left:560.00px;">02/01/20</span>
<span class="t" style="top:990.58px;font-size:10.05px;color:#2b2b30;left:635.00px;">02/13/20</span>
<span class="t" style="top:990.58px;font-size:10.05px;color:#2b2b30;left:712.73px;">10d</span>
<span class="t" style="top:990.58px;font-size:10.05px;color:#2b2b30;left:756.30px;">100%</span>
<div class="a" style="left:178.80px;top:1005.40px;width:710.00px;height:20.80px;background:#e1efff;"></div>
<div class="a" style="left:60.00px;top:1025.70px;width:118.80px;height:1.00px;background:#e4e4ea;"></div>
<span class="t" style="top:1011.40px;font-size:9.6px;color:#7c8190;left:64.60px;">4</span>
<div class="a" style="left:189.60px;top:1010.60px;width:10.80px;height:10.80px;background:#2a8c35;border-radius:50%;"></div>
<span class="t" style="top:1011.48px;font-size:10.05px;color:#2b2b30;left:286.80px;">Plan Review</span>
<span class="t" style="top:1010.50px;font-size:12px;color:#e0453c;font-weight:bold;left:398.80px;">!</span>
<span class="t" style="top:1011.48px;font-size:10.05px;color:#2a5db0;font-weight:bold;font-style:italic;left:434.50px;">*click for contact list</span>
<span class="t" style="top:1011.48px;font-size:10.05px;color:#2b2b30;left:560.00px;">02/14/20</span>
<span class="t" style="top:1011.48px;font-size:10.05px;color:#2b2b30;left:635.00px;">03/05/20</span>
<span class="t" style="top:1011.48px;font-size:10.05px;color:#2b2b30;left:712.73px;">15d</span>
<span class="t" style="top:1011.48px;font-size:10.05px;color:#2b2b30;left:761.89px;">50%</span>
<span class="t" style="top:1011.48px;font-size:10.05px;color:#2b2b30;left:800.80px;">3</span>
<div class="a" style="left:178.80px;top:1026.20px;width:710.00px;height:20.80px;background:#e1efff;"></div>
<div class="a" style="left:60.00px;top:1046.50px;width:118.80px;height:1.00px;background:#e4e4ea;"></div>
<span class="t" style="top:1032.20px;font-size:9.6px;color:#7c8190;left:64.60px;">5</span>
<div class="a" style="left:189.60px;top:1031.40px;width:10.80px;height:10.80px;background:#2a8c35;border-radius:50%;"></div>
<span class="t" style="top:1032.27px;font-size:10.05px;color:#2b2b30;left:286.80px;">Initiation</span>
<div class="a" style="left:396.00px;top:1035.60px;width:9.60px;height:2.20px;background:#f6b92a;border-radius:1px;"></div>
<span class="t" style="top:1032.27px;font-size:10.05px;color:#2b2b30;left:560.00px;">03/06/20</span>
<span class="t" style="top:1032.27px;font-size:10.05px;color:#2b2b30;left:635.00px;">03/19/20</span>
<span class="t" style="top:1032.27px;font-size:10.05px;color:#2b2b30;left:712.73px;">10d</span>
<span class="t" style="top:1032.27px;font-size:10.05px;color:#2b2b30;left:800.80px;">4</span>
<div class="a" style="left:178.80px;top:1047.00px;width:710.00px;height:20.90px;background:#e1efff;"></div>
<div class="a" style="left:60.00px;top:1067.40px;width:118.80px;height:1.00px;background:#e4e4ea;"></div>
<span class="t" style="top:1053.00px;font-size:9.6px;color:#7c8190;left:64.60px;">6</span>
<div class="a" style="left:189.60px;top:1052.20px;width:10.80px;height:10.80px;background:#f5b62f;border-radius:50%;"></div>
<span class="t" style="top:1053.07px;font-size:10.05px;color:#2b2b30;left:286.80px;">Other</span>
<div class="a" style="left:178.80px;top:1067.90px;width:710.00px;height:20.80px;background:#e1efff;"></div>
<div class="a" style="left:60.00px;top:1088.20px;width:118.80px;height:1.00px;background:#e4e4ea;"></div>
<span class="t" style="top:1073.90px;font-size:9.6px;color:#7c8190;left:64.60px;">7</span>
<div class="a" style="left:189.60px;top:1073.10px;width:10.80px;height:10.80px;background:#e01a2b;border-radius:50%;"></div>
<span class="t" style="top:1073.97px;font-size:10.05px;color:#2b2b30;left:286.80px;">Other</span>
<div class="a" style="left:178.80px;top:1088.70px;width:710.00px;height:20.80px;background:#27852f;"></div>
<div class="a" style="left:60.00px;top:1109.00px;width:118.80px;height:1.00px;background:#e4e4ea;"></div>
<span class="t" style="top:1094.70px;font-size:9.6px;color:#7c8190;left:64.60px;">8</span>
<span class="t" style="top:1094.77px;font-size:10.05px;color:#fff;font-weight:bold;left:269.50px;">Phase 2</span>
<svg class="a" style="left:252.00px;top:1093.10px;" width="12" height="12" viewBox="0 0 12 12" ><rect x="0.300" y="0.300" width="11.400" height="11.400" rx="3.200" fill="#fbfbfd"/><path d="M3.600 5l2.400 2.800L8.400 5z" fill="#222"/></svg>
<span class="t" style="top:1094.77px;font-size:10.05px;color:#fff;font-weight:bold;left:560.00px;">03/02/20</span>
<span class="t" style="top:1094.77px;font-size:10.05px;color:#fff;font-weight:bold;left:635.00px;">03/26/20</span>
<span class="t" style="top:1094.77px;font-size:10.05px;color:#fff;font-weight:bold;left:712.18px;">19d</span>
<div class="a" style="left:178.80px;top:1109.50px;width:710.00px;height:33.90px;background:#e8f5ea;"></div>
<div class="a" style="left:60.00px;top:1142.90px;width:118.80px;height:1.00px;background:#e4e4ea;"></div>
<span class="t" style="top:1115.50px;font-size:9.6px;color:#7c8190;left:64.60px;">9</span>
<div class="a" style="left:189.60px;top:1114.70px;width:10.80px;height:10.80px;background:#2a8c35;border-radius:50%;"></div>
<span class="t" style="top:1115.57px;font-size:10.05px;color:#2b2b30;left:286.80px;">Scope &amp; Goal</span>
<span class="t" style="top:1128.57px;font-size:10.05px;color:#2b2b30;left:286.80px;">Setting</span>
<svg class="a" style="left:396.30px;top:1114.30px;" width="9" height="11" viewBox="0 0 9 11" ><path d="M4.500 1v8M1.400 6.200l3.100 3.200 3.100-3.200" fill="none" stroke="#2f62d6" stroke-width="1.600" stroke-linecap="round" stroke-linejoin="round"/></svg>
<div class="a" style="left:441.30px;top:1113.10px;width:68.83px;height:13.60px;background:rgba(150,160,190,.32);border-radius:7px;"></div>
<div class="a" style="left:434.30px;top:1112.90px;width:14.00px;height:14.00px;background:#2fb8a4;border-radius:50%;"></div>
<div class="a" style="left:438.10px;top:1118.50px;width:6.40px;height:2.80px;background:#0e5c50;border-radius:1px;opacity:.8;"></div>
<span class="t" style="top:1115.77px;font-size:10.05px;color:#2b2b30;left:453.00px;">Bill Hudson</span>
<span class="t" style="top:1115.57px;font-size:10.05px;color:#2b2b30;left:560.00px;">03/02/20</span>
<span class="t" style="top:1115.57px;font-size:10.05px;color:#2b2b30;left:635.00px;">03/20/20</span>
<span class="t" style="top:1115.57px;font-size:10.05px;color:#2b2b30;left:712.73px;">15d</span>
<div class="a" style="left:178.80px;top:1143.40px;width:710.00px;height:20.80px;background:#e8f5ea;"></div>
<div class="a" style="left:60.00px;top:1163.70px;width:118.80px;height:1.00px;background:#e4e4ea;"></div>
<span class="t" style="top:1149.40px;font-size:9.6px;color:#7c8190;left:64.60px;">10</span>
<div class="a" style="left:189.60px;top:1148.60px;width:10.80px;height:10.80px;background:#2a8c35;border-radius:50%;"></div>
<span class="t" style="top:1149.47px;font-size:10.05px;color:#2b2b30;left:286.80px;">Budget</span>
<span class="t" style="top:1149.47px;font-size:10.05px;color:#2b2b30;left:560.00px;">03/23/20</span>
<span class="t" style="top:1149.47px;font-size:10.05px;color:#2b2b30;left:635.00px;">03/25/20</span>
<span class="t" style="top:1149.47px;font-size:10.05px;color:#2b2b30;left:718.32px;">3d</span>
<span class="t" style="top:1149.47px;font-size:10.05px;color:#2b2b30;left:800.80px;">9</span>
<div class="a" style="left:178.80px;top:1164.20px;width:710.00px;height:20.80px;background:#e8f5ea;"></div>
<div class="a" style="left:60.00px;top:1184.50px;width:118.80px;height:1.00px;background:#e4e4ea;"></div>
<span class="t" style="top:1170.20px;font-size:9.6px;color:#7c8190;left:64.60px;">11</span>
<div class="a" style="left:189.60px;top:1169.40px;width:10.80px;height:10.80px;background:#2a8c35;border-radius:50%;"></div>
<span class="t" style="top:1170.27px;font-size:10.05px;color:#2b2b30;left:286.80px;">Work Schedule</span>
<span class="t" style="top:1170.27px;font-size:10.05px;color:#2b2b30;left:560.00px;">03/23/20</span>
<span class="t" style="top:1170.27px;font-size:10.05px;color:#2b2b30;left:635.00px;">03/26/20</span>
<span class="t" style="top:1170.27px;font-size:10.05px;color:#2b2b30;left:718.32px;">4d</span>
<span class="t" style="top:1170.27px;font-size:10.05px;color:#2b2b30;left:800.80px;">9</span>
<div class="a" style="left:178.80px;top:1185.00px;width:710.00px;height:33.50px;background:#e8f5ea;"></div>
<div class="a" style="left:60.00px;top:1218.00px;width:118.80px;height:1.00px;background:#e4e4ea;"></div>
<span class="t" style="top:1191.00px;font-size:9.6px;color:#7c8190;left:64.60px;">12</span>
<div class="a" style="left:189.60px;top:1190.20px;width:10.80px;height:10.80px;background:#f5b62f;border-radius:50%;"></div>
<span class="t" style="top:1191.07px;font-size:10.05px;color:#2b2b30;left:286.80px;">Gantt Chart</span>
<span class="t" style="top:1191.07px;font-size:10.05px;color:#2a5db0;font-weight:bold;font-style:italic;left:560.00px;">*click for</span>
<span class="t" style="top:1204.07px;font-size:10.05px;color:#2a5db0;font-weight:bold;font-style:italic;left:560.00px;">date</span>
<div class="a" style="left:178.80px;top:1218.50px;width:710.00px;height:20.80px;background:#e8f5ea;"></div>
<div class="a" style="left:60.00px;top:1238.80px;width:118.80px;height:1.00px;background:#e4e4ea;"></div>
<span class="t" style="top:1224.50px;font-size:9.6px;color:#7c8190;left:64.60px;">13</span>
<div class="a" style="left:189.60px;top:1223.70px;width:10.80px;height:10.80px;background:#e01a2b;border-radius:50%;"></div>
<span class="t" style="top:1224.57px;font-size:10.05px;color:#2b2b30;left:286.80px;">Comm. Plan</span>
<div class="a" style="left:178.80px;top:1239.30px;width:710.00px;height:20.80px;background:#e8f5ea;"></div>
<div class="a" style="left:60.00px;top:1259.60px;width:118.80px;height:1.00px;background:#e4e4ea;"></div>
<span class="t" style="top:1245.30px;font-size:9.6px;color:#7c8190;left:64.60px;">14</span>
<div class="a" style="left:189.60px;top:1244.50px;width:10.80px;height:10.80px;background:#e01a2b;border-radius:50%;"></div>
<span class="t" style="top:1245.37px;font-size:10.05px;color:#2b2b30;left:286.80px;">Risk Management</span>
<div class="a" style="left:178.80px;top:1260.10px;width:710.00px;height:33.40px;background:#e8f5ea;"></div>
<div class="a" style="left:60.00px;top:1293.00px;width:118.80px;height:1.00px;background:#e4e4ea;"></div>
<span class="t" style="top:1266.10px;font-size:9.6px;color:#7c8190;left:64.60px;">15</span>
<div class="a" style="left:189.60px;top:1265.30px;width:10.80px;height:10.80px;background:#e01a2b;border-radius:50%;"></div>
<span class="t" style="top:1266.17px;font-size:10.05px;color:#2b2b30;left:286.80px;">Milestone - Set</span>
<span class="t" style="top:1279.17px;font-size:10.05px;color:#2b2b30;left:286.80px;">Duration to 0</span>
<span class="t" style="top:1266.17px;font-size:10.05px;color:#2b2b30;left:560.00px;">03/26/20</span>
<span class="t" style="top:1266.17px;font-size:10.05px;color:#2b2b30;left:635.00px;">03/26/20</span>
<span class="t" style="top:1266.17px;font-size:10.05px;color:#2b2b30;left:723.91px;">0</span>
<span class="t" style="top:1266.17px;font-size:10.05px;color:#2b2b30;left:800.80px;">11</span>
<div class="a" style="left:178.80px;top:1293.50px;width:710.00px;height:20.90px;background:#efc40f;"></div>
<div class="a" style="left:60.00px;top:1313.90px;width:118.80px;height:1.00px;background:#e4e4ea;"></div>
<span class="t" style="top:1299.50px;font-size:9.6px;color:#7c8190;left:64.60px;">16</span>
<span class="t" style="top:1299.57px;font-size:10.05px;color:#fdf6d4;font-weight:bold;left:269.50px;">Phase 3</span>
<svg class="a" style="left:252.00px;top:1297.90px;" width="12" height="12" viewBox="0 0 12 12" ><rect x="0.300" y="0.300" width="11.400" height="11.400" rx="3.200" fill="#fbfbfd"/><path d="M5 3.600l2.800 2.400L5 8.400z" fill="#222"/></svg>
<div class="a" style="left:178.80px;top:1314.40px;width:710.00px;height:20.80px;background:#14377f;"></div>
<div class="a" style="left:60.00px;top:1334.70px;width:118.80px;height:1.00px;background:#e4e4ea;"></div>
<span class="t" style="top:1320.40px;font-size:9.6px;color:#7c8190;left:64.60px;">22</span>
<span class="t" style="top:1320.47px;font-size:10.05px;color:#fff;font-weight:bold;left:269.50px;">Phase 4</span>
<svg class="a" style="left:252.00px;top:1318.80px;" width="12" height="12" viewBox="0 0 12 12" ><rect x="0.300" y="0.300" width="11.400" height="11.400" rx="3.200" fill="#fbfbfd"/><path d="M5 3.600l2.800 2.400L5 8.400z" fill="#222"/></svg>
<div class="a" style="left:178.80px;top:1335.20px;width:710.00px;height:20.80px;background:#84d28e;"></div>
<div class="a" style="left:60.00px;top:1355.50px;width:118.80px;height:1.00px;background:#e4e4ea;"></div>
<span class="t" style="top:1341.20px;font-size:9.6px;color:#7c8190;left:64.60px;">28</span>
<span class="t" style="top:1341.27px;font-size:10.05px;color:#16161c;font-weight:bold;left:269.50px;">Phase 5</span>
<svg class="a" style="left:252.00px;top:1339.60px;" width="12" height="12" viewBox="0 0 12 12" ><rect x="0.300" y="0.300" width="11.400" height="11.400" rx="3.200" fill="rgba(255,255,255,.75)"/><path d="M5 3.600l2.800 2.400L5 8.400z" fill="#222"/></svg>
<div class="a" style="left:60.00px;top:1377.00px;width:118.80px;height:1.00px;background:#e4e4ea;"></div>
<span class="t" style="top:1362.00px;font-size:9.6px;color:#7c8190;left:64.60px;">34</span>
<svg class="a" style="left:89.25px;top:969.05px;" width="10.5" height="10.5" viewBox="0 0 12 12" fill="none" stroke="#5a5a62" stroke-width="1.15" stroke-linecap="round" stroke-linejoin="round"><path d="M2.300 1.800h7.400c.700 0 1.300.600 1.300 1.300v4.300c0 .700-.600 1.300-1.300 1.300H5.800L3.500 10.600V8.700H2.300C1.600 8.700 1 8.100 1 7.400V3.100c0-.700.600-1.300 1.300-1.300z"/></svg>
<svg class="a" style="left:104.05px;top:969.05px;" width="10.5" height="10.5" viewBox="0 0 12 12" fill="none" stroke="#5a5a62" stroke-width="1.15" stroke-linecap="round" stroke-linejoin="round"><path d="M8.600 3.400v4.800a2.600 2.600 0 01-5.200 0V3.200a1.700 1.700 0 013.400 0v4.900a.85.85 0 01-1.700 0V3.800"/></svg>
<div class="a" style="left:62.50px;top:886.30px;width:184.50px;height:56.20px;background:#0d2363;border-radius:4px;"></div>
<svg class="a" style="left:90.00px;top:882.70px;" width="9" height="4" viewBox="0 0 9 4" ><path d="M0 4L4.500 0 9 4z" fill="#0d2363"/></svg>
<span class="t" style="top:896.25px;font-size:11.3px;color:#fff;font-weight:bold;letter-spacing:-0.550px;left:71.80px;">Switch view</span>
<span class="t" style="top:911.85px;font-size:9.7px;color:#f2f4fb;letter-spacing:-0.232px;left:71.80px;">Choose how your sheet is displayed to</span>
<span class="t" style="top:923.45px;font-size:9.7px;color:#f2f4fb;letter-spacing:-0.177px;left:71.80px;">fit your work.</span>
</div></div>
<div class="a" style="left:975.00px;top:823.00px;width:900.50px;height:570.50px;background:#b5b4ea;box-shadow:0 0 4px 2px #b5b4ea;"></div>
<div class="a" style="left:959px;top:805px;width:899px;height:572.3px;background:#f6f6fb;overflow:hidden">
<div class="a" style="left:-959px;top:-805px;width:1920px;height:1440px">
<div class="a" style="left:972.00px;top:811.30px;width:23.60px;height:23.60px;background:#dcd0fb;border-radius:5px;"></div>
<svg class="a" style="left:978.50px;top:817.80px;" width="10.698666666666666" height="10.698666666666666" viewBox="0 0 11 11" ><path d="M2.600 1h5.800c.900 0 1.600.700 1.600 1.600v3.900L6.500 10H2.600C1.700 10 1 9.300 1 8.400V2.600C1 1.700 1.700 1 2.600 1z" fill="none" stroke="#2c2c6a" stroke-width="1.250" stroke-linejoin="round"/><path d="M10 6.300H7.700c-.700 0-1.200.500-1.200 1.200V10" fill="none" stroke="#2c2c6a" stroke-width="1.100"/></svg>
<span class="t" style="top:815.75px;font-size:13.9px;color:#3a3a3e;font-weight:bold;letter-spacing:-0.211px;left:1004.30px;">Project Timeline Template</span>
<svg class="a" style="left:1176.75px;top:813.75px;" width="17.5" height="17.5" viewBox="0 0 16 16" ><path d="M8 1.600l1.950 4.100 4.450.600-3.250 3.150.800 4.450L8 11.750 4.050 13.900l.800-4.450L1.600 6.300l4.450-.600z" fill="none" stroke="#686870" stroke-width="1" stroke-linejoin="round"/></svg>
<div class="a" style="left:1202.50px;top:812.20px;width:107.50px;height:20.40px;background:#fbfbfe;border:1px solid #a2a2aa;border-radius:5px;"></div>
<svg class="a" style="left:1206.80px;top:816.90px;" width="11" height="11" viewBox="0 0 11 11" ><circle cx="5.500" cy="5.500" r="4.600" fill="none" stroke="#444" stroke-width="1"/><path d="M4.100 4.400c0-.800.600-1.300 1.400-1.300s1.400.500 1.400 1.200c0 1-1.400 1-1.400 2.100" fill="none" stroke="#444" stroke-width="1" stroke-linecap="round"/><circle cx="5.500" cy="8" r=".6" fill="#444"/></svg>
<span class="t" style="top:817.05px;font-size:11.1px;color:#4a4a50;font-weight:bold;letter-spacing:-0.596px;left:1223.30px;">Help &amp; Feedback</span>
<div class="a" style="left:972.50px;top:847.50px;width:900.00px;height:31.30px;background:#fff;border-radius:6px 0 0 6px;"></div>
<div class="a" style="left:976.80px;top:853.80px;width:69.00px;height:19.20px;background:#e5e6f1;border-radius:4px;"></div>
<svg class="a" style="left:980.55px;top:857.15px;" width="12.5" height="12.5" viewBox="0 0 12 12" fill="none" stroke="#4f4f57" stroke-width="1.15" stroke-linecap="round" stroke-linejoin="round"><rect x="1" y="1.500" width="10" height="7.200" rx="1.300"/><path d="M4.400 1.500v9.300M7.600 1.500v7.200"/></svg>
<span class="t" style="top:858.00px;font-size:10.8px;color:#4f4f57;font-weight:bold;letter-spacing:-0.641px;left:998.00px;">Board</span>
<svg class="a" style="left:1033.50px;top:861.50px;" width="7" height="4.4" viewBox="0 0 7 4.4" ><path d="M0.700 0.700L3.500 3.500 6.300 0.700" fill="none" stroke="#4f4f57" stroke-width="1.200" stroke-linecap="round" stroke-linejoin="round"/></svg>
<div class="a" style="left:1052.00px;top:847.50px;width:1.00px;height:31.30px;background:#ececf3;"></div>
<div class="a" style="left:1107.00px;top:847.50px;width:1.00px;height:31.30px;background:#ececf3;"></div>
<div class="a" style="left:1140.50px;top:847.50px;width:1.00px;height:31.30px;background:#ececf3;"></div>
<div class="a" style="left:1374.50px;top:847.50px;width:1.00px;height:31.30px;background:#ececf3;"></div>
<div class="a" style="left:1688.30px;top:847.50px;width:1.00px;height:31.30px;background:#ececf3;"></div>
<div class="a" style="left:1745.00px;top:847.50px;width:1.00px;height:31.30px;background:#ececf3;"></div>
<svg class="a" style="left:1063.25px;top:857.15px;" width="12.5" height="12.5" viewBox="0 0 12 12" fill="none" stroke="#4f4f57" stroke-width="1.15" stroke-linecap="round" stroke-linejoin="round"><path d="M2 4.200h5.200a3 3 0 010 6H5.500"/><path d="M4.300 1.800L1.900 4.200l2.400 2.400"/></svg>
<svg class="a" style="left:1084.25px;top:857.15px;" width="12.5" height="12.5" viewBox="0 0 12 12" fill="none" stroke="#8c8c95" stroke-width="1.15" stroke-linecap="round" stroke-linejoin="round"><path d="M10 4.200H4.800a3 3 0 000 6h1.700"/><path d="M7.700 1.800l2.400 2.400-2.400 2.400"/></svg>
<svg class="a" style="left:1117.75px;top:857.15px;" width="12.5" height="12.5" viewBox="0 0 12 12" fill="none" stroke="#4f4f57" stroke-width="1.15" stroke-linecap="round" stroke-linejoin="round"><circle cx="5.300" cy="5.300" r="3.700"/><path d="M8.100 8.100l2.900 2.900"/></svg>
<svg class="a" style="left:1151.75px;top:857.15px;" width="12.5" height="12.5" viewBox="0 0 12 12" fill="none" stroke="#4f4f57" stroke-width="1.15" stroke-linecap="round" stroke-linejoin="round"><path d="M1.200 1.600h9.600L7.200 6.200v3.600L4.800 11V6.200z"/></svg>
<span class="t" style="top:858.00px;font-size:10.8px;color:#4f4f57;font-weight:bold;letter-spacing:-0.267px;left:1169.00px;">Filter</span>
<div class="a" style="left:1204.00px;top:853.80px;width:66.00px;height:19.20px;background:#dbe6fb;border-radius:4px;"></div>
<svg class="a" style="left:1206.75px;top:857.15px;" width="12.5" height="12.5" viewBox="0 0 12 12" fill="none" stroke="#1f4fb4" stroke-width="1.15" stroke-linecap="round" stroke-linejoin="round"><rect x="1.300" y="1.300" width="9.400" height="9.400" rx="1.600" stroke-dasharray="2 1.300"/><circle cx="6" cy="6" r="2"/></svg>
<span class="t" style="top:858.00px;font-size:10.8px;color:#1f4fb4;font-weight:bold;letter-spacing:-0.584px;left:1224.50px;">Status</span>
<svg class="a" style="left:1258.50px;top:861.50px;" width="7" height="4.4" viewBox="0 0 7 4.4" ><path d="M0.700 0.700L3.500 3.500 6.300 0.700" fill="none" stroke="#1f4fb4" stroke-width="1.200" stroke-linecap="round" stroke-linejoin="round"/></svg>
<div class="a" style="left:1274.50px;top:853.80px;width:93.50px;height:19.20px;background:#dbe6fb;border-radius:4px;"></div>
<svg class="a" style="left:1278.05px;top:857.15px;" width="12.5" height="12.5" viewBox="0 0 12 12" fill="none" stroke="#1f4fb4" stroke-width="1.15" stroke-linecap="round" stroke-linejoin="round"><path d="M1 3.300h5M9.300 3.300H11M1 8.700h1.700M6 8.700h5"/><circle cx="7.600" cy="3.300" r="1.600"/><circle cx="4.300" cy="8.700" r="1.600"/></svg>
<span class="t" style="top:858.00px;font-size:10.8px;color:#1f4fb4;font-weight:bold;letter-spacing:-0.565px;left:1295.50px;">4 fields shown</span>
<svg class="a" style="left:1385.55px;top:857.15px;" width="12.5" height="12.5" viewBox="0 0 12 12" fill="none" stroke="#4f4f57" stroke-width="1.15" stroke-linecap="round" stroke-linejoin="round"><rect x="1" y="2" width="10" height="8" rx="2"/><path d="M1 6h10"/></svg>
<span class="t" style="top:858.00px;font-size:10.8px;color:#4f4f57;font-weight:bold;letter-spacing:-0.328px;left:1403.00px;">Comfortable</span>
<svg class="a" style="left:1467.50px;top:861.50px;" width="7" height="4.4" viewBox="0 0 7 4.4" ><path d="M0.700 0.700L3.500 3.500 6.300 0.700" fill="none" stroke="#4f4f57" stroke-width="1.200" stroke-linecap="round" stroke-linejoin="round"/></svg>
<svg class="a" style="left:1487.55px;top:857.15px;" width="12.5" height="12.5" viewBox="0 0 12 12" fill="none" stroke="#4f4f57" stroke-width="1.15" stroke-linecap="round" stroke-linejoin="round"><rect x="1.200" y="1.200" width="3.800" height="3.800" rx=".8"/><rect x="7" y="1.200" width="3.800" height="3.800" rx=".8"/><rect x="1.200" y="7" width="3.800" height="3.800" rx=".8"/><rect x="7" y="7" width="3.800" height="3.800" rx=".8"/></svg>
<span class="t" style="top:858.00px;font-size:10.8px;color:#4f4f57;font-weight:bold;letter-spacing:-0.496px;left:1504.50px;">Separate cards</span>
<svg class="a" style="left:1579.00px;top:861.50px;" width="7" height="4.4" viewBox="0 0 7 4.4" ><path d="M0.700 0.700L3.500 3.500 6.300 0.700" fill="none" stroke="#4f4f57" stroke-width="1.200" stroke-linecap="round" stroke-linejoin="round"/></svg>
<svg class="a" style="left:1598.75px;top:857.15px;" width="12.5" height="12.5" viewBox="0 0 12 12" fill="none" stroke="#4f4f57" stroke-width="1.15" stroke-linecap="round" stroke-linejoin="round"><rect x="1" y="1.500" width="10" height="9" rx="1.500"/><path d="M1 4.500h10M1 7.500h10M4.500 1.500v9" stroke-width=".9"/><rect x="1.500" y="5" width="2.600" height="2.200" fill="#4f4f57" stroke="none"/><rect x="5" y="2" width="5.500" height="2.200" fill="#4f4f57" stroke="none"/></svg>
<span class="t" style="top:858.00px;font-size:10.8px;color:#4f4f57;font-weight:bold;letter-spacing:-0.493px;left:1616.00px;">Format rules</span>
<svg class="a" style="left:1698.75px;top:857.15px;" width="12.5" height="12.5" viewBox="0 0 12 12" fill="none" stroke="#4f4f57" stroke-width="1.15" stroke-linecap="round" stroke-linejoin="round"><path d="M2.300 1.800h7.400c.700 0 1.300.600 1.300 1.300v4.300c0 .700-.600 1.300-1.300 1.300H5.800L3.500 10.600V8.700H2.300C1.600 8.700 1 8.100 1 7.400V3.100c0-.700.600-1.300 1.300-1.300z"/></svg>
<svg class="a" style="left:1722.55px;top:857.15px;" width="12.5" height="12.5" viewBox="0 0 12 12" fill="none" stroke="#4f4f57" stroke-width="1.15" stroke-linecap="round" stroke-linejoin="round"><path d="M8.600 3.400v4.800a2.600 2.600 0 01-5.200 0V3.200a1.700 1.700 0 013.400 0v4.900a.85.85 0 01-1.700 0V3.800"/></svg>
<svg class="a" style="left:1756.25px;top:857.15px;" width="12.5" height="12.5" viewBox="0 0 12 12" fill="none" stroke="#4f4f57" stroke-width="1.15" stroke-linecap="round" stroke-linejoin="round"><rect x="1.200" y="5.600" width="2.400" height="5.200" rx=".6"/><rect x="4.800" y="1.400" width="2.400" height="9.400" rx=".6"/><rect x="8.400" y="7.200" width="2.400" height="3.600" rx=".6"/></svg>
<span class="t" style="top:858.00px;font-size:10.8px;color:#4f4f57;font-weight:bold;letter-spacing:-0.419px;left:1773.80px;">Analyze Data</span>
<span class="t" style="top:903.30px;font-size:11px;color:#45454d;left:1193.36px;">(4)</span>
<div class="a" style="left:1225.90px;top:902.20px;width:13.20px;height:13.20px;background:#f3b02c;border-radius:50%;"></div>
<span class="t" style="top:903.00px;font-size:11.6px;color:#25252b;font-weight:bold;letter-spacing:-0.434px;left:1246.80px;">Yellow</span>
<span class="t" style="top:903.30px;font-size:11px;color:#45454d;left:1407.36px;">(2)</span>
<div class="a" style="left:1439.70px;top:902.20px;width:13.20px;height:13.20px;background:#22862d;border-radius:50%;"></div>
<span class="t" style="top:903.00px;font-size:11.6px;color:#25252b;font-weight:bold;letter-spacing:-0.505px;left:1460.50px;">Green</span>
<span class="t" style="top:903.30px;font-size:11px;color:#45454d;left:1621.06px;">(7)</span>
<div class="a" style="left:1653.90px;top:902.20px;width:13.20px;height:13.20px;background:#336fe0;border-radius:50%;"></div>
<span class="t" style="top:903.00px;font-size:11.6px;color:#25252b;font-weight:bold;letter-spacing:-0.659px;left:1674.30px;">Blue</span>
<span class="t" style="top:903.30px;font-size:11px;color:#45454d;left:1835.36px;">(1)</span>
<div class="a" style="left:986.8px;top:943.5px;width:0;height:0"><div style="position:absolute;left:0;top:0;transform-origin:0 0;transform:rotate(90deg) translateY(-50%);white-space:nowrap;font-size:10.9px;line-height:12px;color:#25252b;letter-spacing:.1px"><b>Uncategorized</b><span style="font-weight:normal;color:#45454d;margin-left:9px;font-size:10.3px">(21)</span></div></div>
<div class="a" style="left:1012.00px;top:934.50px;width:193.60px;height:35.50px;background:#fff;border-radius:6px;box-shadow:0 0 2.500px rgba(90,90,130,.22);overflow:hidden"><div class="a" style="left:0;top:0;width:6px;height:100%;background:#d595d9"></div></div>
<span class="t" style="top:947.10px;font-size:11.4px;color:#303036;font-weight:bold;letter-spacing:-0.321px;left:1027.00px;">Other</span>
<div class="a" style="left:1012.00px;top:983.00px;width:193.60px;height:36.50px;background:#fff;border-radius:6px;box-shadow:0 0 2.500px rgba(90,90,130,.22);overflow:hidden"><div class="a" style="left:0;top:0;width:6px;height:100%;background:#fbc65e"></div></div>
<span class="t" style="top:996.30px;font-size:11.4px;color:#303036;font-weight:bold;letter-spacing:-0.538px;left:1027.00px;">Comm. Plan</span>
<div class="a" style="left:1012.00px;top:1032.00px;width:193.60px;height:36.80px;background:#fff;border-radius:6px;box-shadow:0 0 2.500px rgba(90,90,130,.22);overflow:hidden"><div class="a" style="left:0;top:0;width:6px;height:100%;background:#fbc65e"></div></div>
<span class="t" style="top:1045.50px;font-size:11.4px;color:#303036;font-weight:bold;letter-spacing:-0.395px;left:1027.00px;">Risk Management</span>
<div class="a" style="left:1012.00px;top:1082.00px;width:193.60px;height:54.30px;background:#fff;border-radius:6px;box-shadow:0 0 2.500px rgba(90,90,130,.22);overflow:hidden"><div class="a" style="left:0;top:0;width:6px;height:100%;background:#fbc65e"></div></div>
<span class="t" style="top:1095.10px;font-size:11.4px;color:#303036;font-weight:bold;letter-spacing:-0.262px;left:1027.00px;">Milestone - Set Duration to 0</span>
<span class="t" style="top:1113.30px;font-size:11.4px;color:#555;letter-spacing:0.241px;left:1027.00px;">03/26/20</span>
<div class="a" style="left:1226.30px;top:934.50px;width:193.60px;height:35.50px;background:#fff;border-radius:6px;box-shadow:0 0 2.500px rgba(90,90,130,.22);overflow:hidden"><div class="a" style="left:0;top:0;width:6px;height:100%;background:#d595d9"></div></div>
<span class="t" style="top:947.10px;font-size:11.4px;color:#303036;font-weight:bold;letter-spacing:-0.321px;left:1241.30px;">Other</span>
<div class="a" style="left:1226.30px;top:983.00px;width:193.60px;height:51.50px;background:#fff;border-radius:6px;box-shadow:0 0 2.500px rgba(90,90,130,.22);overflow:hidden"><div class="a" style="left:0;top:0;width:6px;height:100%;background:#fbc65e"></div></div>
<span class="t" style="top:996.30px;font-size:11.4px;color:#303036;font-weight:bold;letter-spacing:-0.291px;left:1241.30px;">Gantt Chart</span>
<span class="t" style="top:1014.20px;font-size:11.4px;color:#555;letter-spacing:0.071px;left:1241.30px;">*click for date</span>
<div class="a" style="left:1440.00px;top:933.80px;width:193.60px;height:89.20px;background:#fff;border-radius:6px;box-shadow:0 0 2.500px rgba(90,90,130,.22);overflow:hidden"><div class="a" style="left:0;top:0;width:6px;height:100%;background:#9b1b9f"></div></div>
<span class="t" style="top:947.10px;font-size:11.4px;color:#303036;font-weight:bold;letter-spacing:-0.542px;left:1454.50px;">Phase 1</span>
<div class="a" style="left:1455.30px;top:963.60px;width:14.40px;height:14.40px;background:#dca4e1;border-radius:50%;"></div>
<span class="t" style="top:967.50px;font-size:6.8px;color:#8a2c90;font-weight:bold;left:1457.97px;">BT</span>
<span class="t" style="top:965.70px;font-size:11.4px;color:#555;left:1474.50px;">Bob Thorton</span>
<span class="t" style="top:983.70px;font-size:11.4px;color:#555;letter-spacing:0.078px;left:1454.50px;">02/01/20</span>
<svg class="a" style="left:1594.05px;top:1001.55px;" width="10.5" height="10.5" viewBox="0 0 12 12" fill="none" stroke="#6a6a72" stroke-width="1.15" stroke-linecap="round" stroke-linejoin="round"><path d="M2.300 1.800h7.400c.700 0 1.300.600 1.300 1.300v4.300c0 .700-.600 1.300-1.300 1.300H5.800L3.500 10.600V8.700H2.300C1.600 8.700 1 8.100 1 7.400V3.100c0-.700.600-1.300 1.300-1.300z"/></svg>
<svg class="a" style="left:1612.25px;top:1001.55px;" width="10.5" height="10.5" viewBox="0 0 12 12" fill="none" stroke="#6a6a72" stroke-width="1.15" stroke-linecap="round" stroke-linejoin="round"><path d="M8.600 3.400v4.800a2.600 2.600 0 01-5.200 0V3.200a1.700 1.700 0 013.400 0v4.900a.85.85 0 01-1.700 0V3.800"/></svg>
<div class="a" style="left:1440.00px;top:1035.50px;width:193.60px;height:86.30px;background:#fff;border-radius:6px;box-shadow:0 0 2.500px rgba(90,90,130,.22);overflow:hidden"><div class="a" style="left:0;top:0;width:6px;height:100%;background:#d595d9"></div></div>
<span class="t" style="top:1048.90px;font-size:11.4px;color:#303036;font-weight:bold;letter-spacing:-0.430px;left:1454.50px;">Plan Review</span>
<span class="t" style="top:1066.75px;font-size:11.5px;color:#e4574e;font-weight:bold;left:1458.89px;">!</span>
<span class="t" style="top:1083.20px;font-size:11.4px;color:#555;letter-spacing:0.052px;left:1453.30px;">*click for contact list</span>
<span class="t" style="top:1099.20px;font-size:11.4px;color:#555;letter-spacing:0.078px;left:1454.50px;">02/14/20</span>
<div class="a" style="left:1440.00px;top:1134.30px;width:193.60px;height:72.20px;background:#fff;border-radius:6px;box-shadow:0 0 2.500px rgba(90,90,130,.22);overflow:hidden"><div class="a" style="left:0;top:0;width:6px;height:100%;background:#d595d9"></div></div>
<span class="t" style="top:1147.60px;font-size:11.4px;color:#303036;font-weight:bold;letter-spacing:-0.249px;left:1454.50px;">Initiation</span>
<div class="a" style="left:1455.50px;top:1170.60px;width:10.50px;height:2.00px;background:#f6c34a;border-radius:1px;"></div>
<span class="t" style="top:1184.40px;font-size:11.4px;color:#555;letter-spacing:0.328px;left:1454.50px;">03/06/20</span>
<div class="a" style="left:1440.00px;top:1220.00px;width:193.60px;height:54.00px;background:#fff;border-radius:6px;box-shadow:0 0 2.500px rgba(90,90,130,.22);overflow:hidden"><div class="a" style="left:0;top:0;width:6px;height:100%;background:#f59b0b"></div></div>
<span class="t" style="top:1233.10px;font-size:11.4px;color:#303036;font-weight:bold;letter-spacing:-0.371px;left:1454.50px;">Phase 2</span>
<span class="t" style="top:1251.90px;font-size:11.4px;color:#555;letter-spacing:0.328px;left:1454.50px;">03/02/20</span>
<div class="a" style="left:1440.00px;top:1287.50px;width:193.60px;height:112.50px;background:#fff;border-radius:6px;box-shadow:0 0 2.500px rgba(90,90,130,.22);overflow:hidden"><div class="a" style="left:0;top:0;width:6px;height:100%;background:#fbc65e"></div></div>
<span class="t" style="top:1300.60px;font-size:11.4px;color:#303036;font-weight:bold;letter-spacing:-0.421px;left:1454.50px;">Scope &amp; Goal Setting</span>
<svg class="a" style="left:1456.00px;top:1319.30px;" width="9.5" height="11" viewBox="0 0 9.5 11" ><path d="M4.750 1v8M1.500 6.200l3.250 3.300L8 6.200" fill="none" stroke="#3d67d8" stroke-width="1.700" stroke-linecap="round" stroke-linejoin="round"/></svg>
<div class="a" style="left:1455.30px;top:1334.80px;width:14.40px;height:14.40px;background:#2fb8a4;border-radius:50%;"></div>
<div class="a" style="left:1458.90px;top:1340.50px;width:7.20px;height:3.00px;background:#0e5c50;border-radius:1px;opacity:.85;"></div>
<span class="t" style="top:1336.90px;font-size:11.4px;color:#555;letter-spacing:-0.151px;left:1474.50px;">Bill Hudson</span>
<span class="t" style="top:1354.90px;font-size:11.4px;color:#555;letter-spacing:0.328px;left:1454.50px;">03/02/20</span>
<div class="a" style="left:1653.80px;top:933.80px;width:193.60px;height:90.00px;background:#fff;border-radius:6px;box-shadow:0 0 2.500px rgba(90,90,130,.22);overflow:hidden"><div class="a" style="left:0;top:0;width:6px;height:100%;background:#d595d9"></div></div>
<span class="t" style="top:947.10px;font-size:11.4px;color:#303036;font-weight:bold;letter-spacing:-0.291px;left:1668.80px;">Project Charter</span>
<span class="t" style="top:965.05px;font-size:11.5px;color:#e4574e;font-weight:bold;left:1672.89px;">!</span>
<div class="a" style="left:1669.30px;top:981.60px;width:14.40px;height:14.40px;background:#36c455;border-radius:50%;"></div>
<div class="a" style="left:1672.90px;top:987.30px;width:7.20px;height:3.00px;background:#145c22;border-radius:1px;opacity:.85;"></div>
<span class="t" style="top:983.70px;font-size:11.4px;color:#555;letter-spacing:-0.098px;left:1688.80px;">Abby Wright</span>
<span class="t" style="top:1001.70px;font-size:11.4px;color:#555;letter-spacing:0.078px;left:1668.80px;">02/01/20</span>
<div class="a" style="left:976.30px;top:883.00px;width:193.20px;height:58.30px;background:#0d2363;border-radius:4px;"></div>
<svg class="a" style="left:1006.80px;top:879.40px;" width="9" height="4" viewBox="0 0 9 4" ><path d="M0 4L4.500 0 9 4z" fill="#0d2363"/></svg>
<span class="t" style="top:893.00px;font-size:11.8px;color:#fff;font-weight:bold;letter-spacing:-0.581px;left:985.80px;">Switch view</span>
<span class="t" style="top:909.55px;font-size:10.1px;color:#f2f4fb;letter-spacing:-0.228px;left:985.80px;">Choose how your sheet is displayed to</span>
<span class="t" style="top:921.35px;font-size:10.1px;color:#f2f4fb;letter-spacing:-0.196px;left:985.80px;">fit your work.</span>
</div></div>
</div></div>
</body></html>
